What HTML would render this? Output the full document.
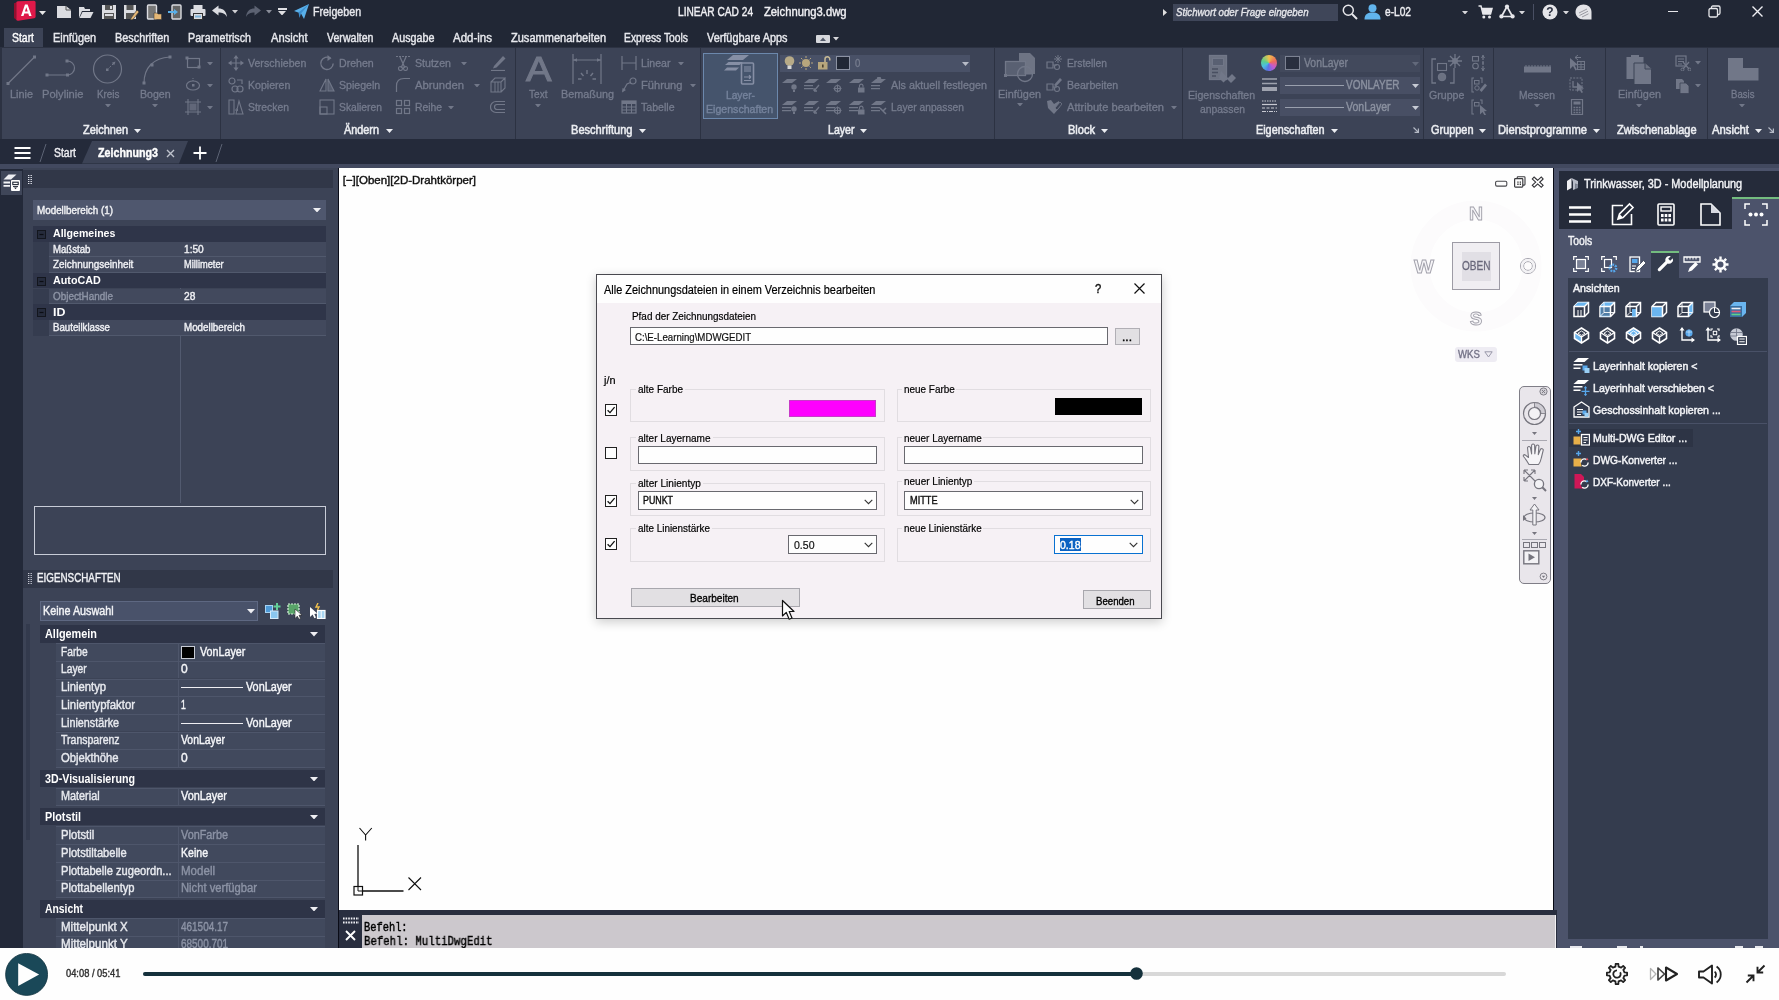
<!DOCTYPE html>
<html><head><meta charset="utf-8"><title>LINEAR CAD 24</title>
<style>
html,body{margin:0;padding:0}
body{width:1779px;height:1000px;position:relative;overflow:hidden;background:#222836;font-family:"Liberation Sans",sans-serif}
.t{position:absolute;white-space:nowrap;display:block;transform-origin:0 50%}
.r{position:absolute;box-sizing:border-box;display:block}
#w{position:absolute;left:0;top:0;width:1779px;height:1000px;overflow:hidden;will-change:transform;opacity:.9999}
</style></head><body><div id="w">
<div class="r" style="left:0.0px;top:0.0px;width:1779.0px;height:47.0px;background:#222836;"></div>
<svg class="r" style="left:13.0px;top:0.0px;" width="24" height="22" viewBox="0 0 24 22"><path d="M3.2 2.6Q3.4 1.4 4.8 1.3L21 0.8Q22.6 0.8 22.6 2.4V16.6Q22.6 18 21.2 18.3L5.4 20.8Q3.8 21 3.2 19.8Z" fill="#e01a4a"/><path d="M1 3.2L3.2 2.4V19.8L1.6 18.6Q1 18.2 1 17.4Z" fill="#96102f"/><path d="M8 16L12 4.6h2.6L18.6 16h-2.5l-.8-2.6h-4l-.8 2.6Zm3.9-4.5h2.8l-1.4-4.3Z" fill="#fff"/></svg>
<svg class="r" style="left:38.5px;top:10.5px;" width="7" height="4" viewBox="0 0 7 4"><path d="M0 0H7L3.5 4Z" fill="#e8e8e8"/></svg>
<svg class="r" style="left:56.0px;top:4.0px;" width="16" height="16" viewBox="0 0 16 16"><path d="M1 2H10L15 6V14H1Z" fill="#dcdde2"/><path d="M10 2V6H15" fill="none" stroke="#555" stroke-width="1"/></svg>
<svg class="r" style="left:78.0px;top:4.0px;" width="16" height="16" viewBox="0 0 16 16"><path d="M1 3H6L7 5H12V7H4L1 14Z" fill="#dcdde2"/><path d="M4.5 8H15.5L12.5 14H1.5Z" fill="#dcdde2"/></svg>
<svg class="r" style="left:101.0px;top:4.0px;" width="16" height="16" viewBox="0 0 16 16"><path d="M1 1H15V15H1Z" fill="#dcdde2"/><rect x="4" y="1" width="8" height="5" fill="#555"/><rect x="9" y="2" width="2" height="3" fill="#dcdde2"/><rect x="3" y="9" width="10" height="6" fill="#555"/><rect x="4" y="10" width="8" height="2" fill="#dcdde2"/></svg>
<svg class="r" style="left:123.0px;top:4.0px;" width="16" height="16" viewBox="0 0 16 16"><path d="M1 1H13V15H1Z" fill="#dcdde2"/><rect x="3.5" y="1" width="7" height="5" fill="#555"/><rect x="3" y="9" width="8" height="6" fill="#555"/><path d="M8 14L14 6L16 8L10 15.5L7.5 16Z" fill="#e6b877" stroke="#333" stroke-width=".6"/></svg>
<svg class="r" style="left:146.0px;top:4.0px;" width="16" height="16" viewBox="0 0 16 16"><rect x="1.5" y="1" width="9" height="14" rx="1" fill="#777" stroke="#dcdde2" stroke-width="1.4"/><path d="M8 9H11L12 10H15.5V15.5H8Z" fill="#e6b877" stroke="#333" stroke-width=".5"/></svg>
<svg class="r" style="left:168.0px;top:4.0px;" width="16" height="16" viewBox="0 0 16 16"><rect x="4" y="1" width="9" height="14" rx="1" fill="#666" stroke="#dcdde2" stroke-width="1.4"/><path d="M0 7H6V5L10 8L6 11V9H0Z" fill="#5bb0e8"/></svg>
<svg class="r" style="left:190.0px;top:4.0px;" width="16" height="16" viewBox="0 0 16 16"><rect x="3.5" y="1" width="9" height="5" fill="#dcdde2"/><rect x="0.5" y="5" width="15" height="7" rx="1" fill="#dcdde2"/><rect x="3.5" y="9.5" width="9" height="6" fill="#dcdde2" stroke="#333" stroke-width="1"/><rect x="5" y="11.5" width="6" height="2" fill="#7fb4d8"/></svg>
<svg class="r" style="left:212.0px;top:5.0px;" width="16" height="14" viewBox="0 0 16 14"><path d="M0 5.5L6.5 0.5V3.5C11 3.5 14.5 6 15 12C13 8.5 10.5 7.5 6.5 7.5V10.5Z" fill="#dcdde2"/></svg>
<svg class="r" style="left:232.4px;top:10.2px;" width="6" height="3.5" viewBox="0 0 6 3.5"><path d="M0 0H6L3.0 3.5Z" fill="#d0d0d4"/></svg>
<svg class="r" style="left:245.0px;top:5.0px;" width="16" height="14" viewBox="0 0 16 14"><path d="M16 5.5L9.5 0.5V3.5C5 3.5 1.5 6 1 12C3 8.5 5.5 7.5 9.5 7.5V10.5Z" fill="#5d6373"/></svg>
<svg class="r" style="left:265.7px;top:10.2px;" width="6" height="3.5" viewBox="0 0 6 3.5"><path d="M0 0H6L3.0 3.5Z" fill="#8a8e9a"/></svg>
<div class="r" style="left:277.5px;top:8.0px;width:9.0px;height:1.6px;background:#e0e0e4;"></div>
<svg class="r" style="left:278.0px;top:10.9px;" width="8" height="4.5" viewBox="0 0 8 4.5"><path d="M0 0H8L4.0 4.5Z" fill="#e0e0e4"/></svg>
<svg class="r" style="left:294.0px;top:4.0px;" width="15" height="15" viewBox="0 0 15 15"><path d="M0 7L15 0L10 15L7 9.5Z" fill="#5ab0ea"/><path d="M15 0L7 9.5L5.5 14L4.5 8.6Z" fill="#3d8fd0"/></svg>
<span class="t" style="left:313.2px;top:3.8px;font-size:12px;line-height:16px;color:#e8e9ee;transform:scaleX(0.890);-webkit-text-stroke:0.4px #e8e9ee;">Freigeben</span>
<span class="t" style="left:678.0px;top:3.8px;font-size:12px;line-height:16px;color:#f0f0f4;transform:scaleX(0.846);-webkit-text-stroke:0.4px #f0f0f4;">LINEAR CAD 24</span>
<span class="t" style="left:764.0px;top:3.8px;font-size:12px;line-height:16px;color:#f0f0f4;transform:scaleX(0.937);-webkit-text-stroke:0.4px #f0f0f4;">Zeichnung3.dwg</span>
<svg class="r" style="left:1163.0px;top:8.5px;" width="4" height="7" viewBox="0 0 4 7"><path d="M0 0L4 3.5L0 7Z" fill="#e0e0e0"/></svg>
<div class="r" style="left:1173.0px;top:3.5px;width:165.0px;height:17.0px;background:#40475a;"></div>
<span class="t" style="left:1175.5px;top:4.6px;font-size:11px;line-height:15px;color:#e4e5ea;transform:scaleX(0.881);-webkit-text-stroke:0.4px #e4e5ea;font-style:italic;">Stichwort oder Frage eingeben</span>
<svg class="r" style="left:1342.0px;top:4.0px;" width="16" height="16" viewBox="0 0 16 16"><circle cx="6.3" cy="6.3" r="5" fill="none" stroke="#e8e8ec" stroke-width="1.5"/><path d="M10 10L15 15" stroke="#e8e8ec" stroke-width="2"/></svg>
<svg class="r" style="left:1364.0px;top:3.0px;" width="17" height="17" viewBox="0 0 17 17"><circle cx="8.5" cy="5.2" r="4" fill="#62b5ee"/><path d="M0.5 16.5C0.5 11 4 9.6 8.5 9.6S16.5 11 16.5 16.5Z" fill="#62b5ee"/></svg>
<span class="t" style="left:1385.0px;top:4.1px;font-size:12px;line-height:16px;color:#f0f0f4;transform:scaleX(0.847);-webkit-text-stroke:0.4px #f0f0f4;">e-L02</span>
<svg class="r" style="left:1462.0px;top:10.8px;" width="6" height="3.5" viewBox="0 0 6 3.5"><path d="M0 0H6L3.0 3.5Z" fill="#d8d8dc"/></svg>
<svg class="r" style="left:1478.0px;top:5.0px;" width="15" height="14" viewBox="0 0 15 14"><path d="M0.5 1H3L5 9H12.5L14 3.5H4" fill="none" stroke="#e8e8ec" stroke-width="1.5"/><circle cx="5.8" cy="12" r="1.5" fill="#e8e8ec"/><circle cx="11.5" cy="12" r="1.5" fill="#e8e8ec"/><path d="M4 3.5H14L12.5 9H5Z" fill="#e8e8ec"/></svg>
<svg class="r" style="left:1499.0px;top:4.0px;" width="16" height="15" viewBox="0 0 16 15"><path d="M8 2.5L2.5 12.5H13.5Z" fill="none" stroke="#e8e8ec" stroke-width="1.7"/><circle cx="8" cy="2.6" r="2.1" fill="#e8e8ec"/><circle cx="2.4" cy="12.4" r="2.1" fill="#e8e8ec"/><circle cx="13.6" cy="12.4" r="2.1" fill="#e8e8ec"/></svg>
<svg class="r" style="left:1518.5px;top:10.8px;" width="6" height="3.5" viewBox="0 0 6 3.5"><path d="M0 0H6L3.0 3.5Z" fill="#d8d8dc"/></svg>
<div class="r" style="left:1533.0px;top:4.0px;width:1.0px;height:16.0px;background:#4a5064;"></div>
<svg class="r" style="left:1542.0px;top:4.0px;" width="16" height="16" viewBox="0 0 16 16"><circle cx="8" cy="8" r="7.5" fill="#e6e6ea"/><text x="8" y="12.2" font-size="12" font-weight="bold" text-anchor="middle" fill="#2a3040" font-family="Liberation Sans">?</text></svg>
<svg class="r" style="left:1563.0px;top:10.8px;" width="6" height="3.5" viewBox="0 0 6 3.5"><path d="M0 0H6L3.0 3.5Z" fill="#d8d8dc"/></svg>
<svg class="r" style="left:1575.0px;top:4.0px;" width="17" height="16" viewBox="0 0 17 16"><path d="M8.5 0.5C13 0.5 16.5 3.5 16.5 8V15.5H8.5C4 15.5 0.5 12.5 0.5 8S4 0.5 8.5 0.5Z" fill="#e4e4e8"/><path d="M4 9L12 5M4.5 11.5L13 7.2M7 13L13.5 9.8" stroke="#9a9aa2" stroke-width="1"/></svg>
<div class="r" style="left:1668.0px;top:11.0px;width:10.0px;height:1.3px;background:#e8e8ec;"></div>
<svg class="r" style="left:1708.0px;top:5.0px;" width="13" height="13" viewBox="0 0 13 13"><rect x="1" y="3.5" width="8.5" height="8.5" rx="1.5" fill="none" stroke="#e8e8ec" stroke-width="1.3"/><path d="M3.5 3.5V2.5Q3.5 1 5 1H10.5Q12 1 12 2.5V8Q12 9.5 10.5 9.5H9.5" fill="none" stroke="#e8e8ec" stroke-width="1.3"/></svg>
<svg class="r" style="left:1752.0px;top:6.0px;" width="11" height="11" viewBox="0 0 11 11"><path d="M0.5 0.5L10.5 10.5M10.5 0.5L0.5 10.5" stroke="#f0f0f4" stroke-width="1.4"/></svg>
<div class="r" style="left:4.0px;top:28.0px;width:38.5px;height:20.0px;background:#3d4457;"></div>
<span class="t" style="left:12.0px;top:29.8px;font-size:12px;line-height:16px;color:#fff;transform:scaleX(0.868);-webkit-text-stroke:0.4px #fff;">Start</span>
<span class="t" style="left:53.0px;top:29.8px;font-size:12px;line-height:16px;color:#e9eaef;transform:scaleX(0.912);-webkit-text-stroke:0.4px #e9eaef;">Einfügen</span>
<span class="t" style="left:115.0px;top:29.8px;font-size:12px;line-height:16px;color:#e9eaef;transform:scaleX(0.905);-webkit-text-stroke:0.4px #e9eaef;">Beschriften</span>
<span class="t" style="left:188.4px;top:29.8px;font-size:12px;line-height:16px;color:#e9eaef;transform:scaleX(0.891);-webkit-text-stroke:0.4px #e9eaef;">Parametrisch</span>
<span class="t" style="left:271.0px;top:29.8px;font-size:12px;line-height:16px;color:#e9eaef;transform:scaleX(0.930);-webkit-text-stroke:0.4px #e9eaef;">Ansicht</span>
<span class="t" style="left:326.5px;top:29.8px;font-size:12px;line-height:16px;color:#e9eaef;transform:scaleX(0.882);-webkit-text-stroke:0.4px #e9eaef;">Verwalten</span>
<span class="t" style="left:392.4px;top:29.8px;font-size:12px;line-height:16px;color:#e9eaef;transform:scaleX(0.895);-webkit-text-stroke:0.4px #e9eaef;">Ausgabe</span>
<span class="t" style="left:453.0px;top:29.8px;font-size:12px;line-height:16px;color:#e9eaef;transform:scaleX(0.959);-webkit-text-stroke:0.4px #e9eaef;">Add-ins</span>
<span class="t" style="left:510.5px;top:29.8px;font-size:12px;line-height:16px;color:#e9eaef;transform:scaleX(0.919);-webkit-text-stroke:0.4px #e9eaef;">Zusammenarbeiten</span>
<span class="t" style="left:624.0px;top:29.8px;font-size:12px;line-height:16px;color:#e9eaef;transform:scaleX(0.859);-webkit-text-stroke:0.4px #e9eaef;">Express Tools</span>
<span class="t" style="left:707.0px;top:29.8px;font-size:12px;line-height:16px;color:#e9eaef;transform:scaleX(0.907);-webkit-text-stroke:0.4px #e9eaef;">Verfügbare Apps</span>
<svg class="r" style="left:816.0px;top:35.0px;" width="14" height="8" viewBox="0 0 14 8"><rect x="0" y="0" width="14" height="8" rx="1" fill="#d8d9de"/><path d="M4 6L7 2.5L10 6Z" fill="#555c6c"/></svg>
<svg class="r" style="left:833.0px;top:37.2px;" width="6" height="3.5" viewBox="0 0 6 3.5"><path d="M0 0H6L3.0 3.5Z" fill="#d8d8dc"/></svg>
<div class="r" style="left:0.0px;top:47.0px;width:1779.0px;height:91.5px;background:#2d3343;"></div>
<div class="r" style="left:1.5px;top:47.5px;width:218.5px;height:91.0px;background:#3d4457;"></div>
<div class="r" style="left:221.2px;top:47.5px;width:293.8px;height:91.0px;background:#3d4457;"></div>
<div class="r" style="left:516.2px;top:47.5px;width:183.8px;height:91.0px;background:#3d4457;"></div>
<div class="r" style="left:701.2px;top:47.5px;width:292.8px;height:91.0px;background:#3d4457;"></div>
<div class="r" style="left:995.2px;top:47.5px;width:186.8px;height:91.0px;background:#3d4457;"></div>
<div class="r" style="left:1183.2px;top:47.5px;width:239.8px;height:91.0px;background:#3d4457;"></div>
<div class="r" style="left:1424.2px;top:47.5px;width:68.8px;height:91.0px;background:#3d4457;"></div>
<div class="r" style="left:1494.2px;top:47.5px;width:110.8px;height:91.0px;background:#3d4457;"></div>
<div class="r" style="left:1606.2px;top:47.5px;width:100.8px;height:91.0px;background:#3d4457;"></div>
<div class="r" style="left:1708.2px;top:47.5px;width:70.8px;height:91.0px;background:#3d4457;"></div>
<svg class="r" style="left:5.0px;top:54.0px;" width="32" height="32" viewBox="0 0 32 32"><path d="M3 29.5L29.5 3" stroke="#727889" stroke-width="1.2"/><rect x="1.5" y="28" width="3" height="3" fill="#727889"/><rect x="28" y="1.5" width="3" height="3" fill="#727889"/></svg>
<span class="t" style="left:10.0px;top:87.1px;font-size:10.6px;line-height:14.6px;color:#777d8f;transform:scaleX(1.027);-webkit-text-stroke:0.3px #777d8f;">Linie</span>
<svg class="r" style="left:44.0px;top:58.0px;" width="36" height="24" viewBox="0 0 36 24"><path d="M3 17H23.5A7 7 0 1 0 23.5 3" fill="none" stroke="#727889" stroke-width="1.2"/><rect x="1.5" y="15.5" width="3" height="3" fill="#727889"/><rect x="22" y="15.5" width="3" height="3" fill="#727889"/><rect x="21.5" y="1.5" width="3" height="3" fill="#727889"/></svg>
<span class="t" style="left:42.0px;top:87.1px;font-size:10.6px;line-height:14.6px;color:#777d8f;transform:scaleX(1.051);-webkit-text-stroke:0.3px #777d8f;">Polylinie</span>
<svg class="r" style="left:92.0px;top:54.0px;" width="32" height="32" viewBox="0 0 32 32"><circle cx="15.5" cy="15" r="14" fill="none" stroke="#727889" stroke-width="1.2"/><path d="M15 16L22.5 8.5" stroke="#727889" stroke-width="1" stroke-dasharray="2 1.5"/><path d="M23.5 7.5L19.8 8.8L22.2 11.2Z" fill="#727889"/><rect x="14" y="14.5" width="2.5" height="2.5" fill="#727889"/></svg>
<span class="t" style="left:96.5px;top:87.1px;font-size:10.6px;line-height:14.6px;color:#777d8f;transform:scaleX(0.932);-webkit-text-stroke:0.3px #777d8f;">Kreis</span>
<svg class="r" style="left:104.5px;top:103.5px;" width="6" height="3.5" viewBox="0 0 6 3.5"><path d="M0 0H6L3.0 3.5Z" fill="#727889"/></svg>
<svg class="r" style="left:140.0px;top:54.0px;" width="34" height="32" viewBox="0 0 34 32"><path d="M4 29C4 14 13 4 30 3" fill="none" stroke="#727889" stroke-width="1.2"/><rect x="2.5" y="27.5" width="3" height="3" fill="#727889"/><rect x="28.5" y="1.5" width="3" height="3" fill="#727889"/><rect x="10.5" y="9.5" width="3" height="3" fill="#727889"/></svg>
<span class="t" style="left:140.0px;top:87.1px;font-size:10.6px;line-height:14.6px;color:#777d8f;-webkit-text-stroke:0.3px #777d8f;">Bogen</span>
<svg class="r" style="left:152.0px;top:103.5px;" width="6" height="3.5" viewBox="0 0 6 3.5"><path d="M0 0H6L3.0 3.5Z" fill="#727889"/></svg>
<svg class="r" style="left:185.0px;top:55.0px;" width="16" height="16" viewBox="0 0 16 16"><rect x="2.5" y="3.5" width="12" height="9" fill="none" stroke="#727889" stroke-width="1.2"/><rect x="0.5" y="1.5" width="3" height="3" fill="#727889"/><rect x="12.5" y="10.5" width="3" height="3" fill="#727889"/></svg>
<svg class="r" style="left:185.0px;top:77.0px;" width="16" height="16" viewBox="0 0 16 16"><ellipse cx="8" cy="8.5" rx="6.5" ry="4.5" fill="none" stroke="#727889" stroke-width="1.2"/><rect x="7" y="7" width="2.5" height="2.5" fill="#727889"/><path d="M8 4V1" stroke="#727889" stroke-dasharray="1 1"/></svg>
<svg class="r" style="left:185.0px;top:99.0px;" width="16" height="16" viewBox="0 0 16 16"><path d="M3 0V16M13 0V16M0 3H16M0 13H16" stroke="#727889" stroke-width="1.1"/><rect x="4.5" y="4.5" width="7" height="7" fill="#727889" opacity=".7"/></svg>
<svg class="r" style="left:206.5px;top:61.8px;" width="6" height="3.5" viewBox="0 0 6 3.5"><path d="M0 0H6L3.0 3.5Z" fill="#727889"/></svg>
<svg class="r" style="left:206.5px;top:83.8px;" width="6" height="3.5" viewBox="0 0 6 3.5"><path d="M0 0H6L3.0 3.5Z" fill="#727889"/></svg>
<svg class="r" style="left:206.5px;top:105.8px;" width="6" height="3.5" viewBox="0 0 6 3.5"><path d="M0 0H6L3.0 3.5Z" fill="#727889"/></svg>
<span class="t" style="left:82.5px;top:121.8px;font-size:12px;line-height:16px;color:#eceef2;transform:scaleX(0.912);-webkit-text-stroke:0.55px #eceef2;">Zeichnen</span>
<svg class="r" style="left:133.5px;top:128.5px;" width="7" height="4" viewBox="0 0 7 4"><path d="M0 0H7L3.5 4Z" fill="#eceef2"/></svg>
<svg class="r" style="left:228.0px;top:55.0px;" width="16" height="16" viewBox="0 0 16 16"><path d="M8 2V14M2 8H14" stroke="#727889" stroke-width="1.2"/><path d="M8 0L10.6 3.6H5.4ZM8 16L10.6 12.4H5.4ZM0 8L3.6 5.4V10.6ZM16 8L12.4 5.4V10.6Z" fill="#727889"/></svg>
<span class="t" style="left:248.0px;top:55.5px;font-size:10.6px;line-height:14.6px;color:#777d8f;-webkit-text-stroke:0.3px #777d8f;">Verschieben</span>
<svg class="r" style="left:228.0px;top:77.0px;" width="16" height="16" viewBox="0 0 16 16"><circle cx="4" cy="4" r="3" fill="none" stroke="#727889" stroke-width="1.2"/><circle cx="7" cy="12" r="3" fill="none" stroke="#727889" stroke-width="1.2"/><circle cx="12" cy="12" r="3" fill="none" stroke="#727889" stroke-width="1.2"/><path d="M9 3H14V7" fill="none" stroke="#727889" stroke-width="1.2"/></svg>
<span class="t" style="left:248.0px;top:77.5px;font-size:10.6px;line-height:14.6px;color:#777d8f;-webkit-text-stroke:0.3px #777d8f;">Kopieren</span>
<svg class="r" style="left:228.0px;top:99.0px;" width="16" height="16" viewBox="0 0 16 16"><path d="M1 1H6V15H1ZM8 15L11 2L15 15Z" fill="none" stroke="#727889" stroke-width="1.1"/><path d="M7 11H10M10 11L8.5 9.6M10 11L8.5 12.4" stroke="#727889" stroke-width="1"/></svg>
<span class="t" style="left:248.0px;top:99.5px;font-size:10.6px;line-height:14.6px;color:#777d8f;transform:scaleX(0.980);-webkit-text-stroke:0.3px #777d8f;">Strecken</span>
<svg class="r" style="left:319.0px;top:55.0px;" width="16" height="16" viewBox="0 0 16 16"><path d="M11.5 3.2A6.2 6.2 0 1 0 14.2 8.5" fill="none" stroke="#727889" stroke-width="1.4"/><path d="M8.5 0L12.5 3.2L8.5 6Z" fill="#727889"/></svg>
<span class="t" style="left:339.0px;top:55.5px;font-size:10.6px;line-height:14.6px;color:#777d8f;-webkit-text-stroke:0.3px #777d8f;">Drehen</span>
<svg class="r" style="left:319.0px;top:77.0px;" width="16" height="16" viewBox="0 0 16 16"><path d="M7 2V14H1ZM9 2V14H15Z" fill="none" stroke="#727889" stroke-width="1.1"/><path d="M9 2V14H15Z" fill="#727889" opacity=".5"/></svg>
<span class="t" style="left:339.0px;top:77.5px;font-size:10.6px;line-height:14.6px;color:#777d8f;-webkit-text-stroke:0.3px #777d8f;">Spiegeln</span>
<svg class="r" style="left:319.0px;top:99.0px;" width="16" height="16" viewBox="0 0 16 16"><rect x="1" y="1" width="14" height="14" fill="none" stroke="#727889" stroke-width="1.1"/><rect x="1" y="8" width="7" height="7" fill="none" stroke="#727889" stroke-width="1.1"/></svg>
<span class="t" style="left:339.0px;top:99.5px;font-size:10.6px;line-height:14.6px;color:#777d8f;transform:scaleX(0.973);-webkit-text-stroke:0.3px #777d8f;">Skalieren</span>
<svg class="r" style="left:395.0px;top:55.0px;" width="16" height="16" viewBox="0 0 16 16"><path d="M1 1.5H15" stroke="#727889" stroke-width="1" stroke-dasharray="2 1"/><path d="M5 2L10 13M11 2L6 13" stroke="#727889" stroke-width="1.3"/><circle cx="5.5" cy="13.5" r="2" fill="none" stroke="#727889" stroke-width="1.1"/><circle cx="10.5" cy="13.5" r="2" fill="none" stroke="#727889" stroke-width="1.1"/></svg>
<span class="t" style="left:415.0px;top:55.5px;font-size:10.6px;line-height:14.6px;color:#777d8f;-webkit-text-stroke:0.3px #777d8f;">Stutzen</span>
<svg class="r" style="left:461.0px;top:61.8px;" width="6" height="3.5" viewBox="0 0 6 3.5"><path d="M0 0H6L3.0 3.5Z" fill="#727889"/></svg>
<svg class="r" style="left:395.0px;top:77.0px;" width="16" height="16" viewBox="0 0 16 16"><path d="M1.5 15V9Q1.5 1.5 9 1.5H15" fill="none" stroke="#727889" stroke-width="1.2"/></svg>
<span class="t" style="left:415.0px;top:77.5px;font-size:10.6px;line-height:14.6px;color:#777d8f;transform:scaleX(1.066);-webkit-text-stroke:0.3px #777d8f;">Abrunden</span>
<svg class="r" style="left:473.5px;top:83.8px;" width="6" height="3.5" viewBox="0 0 6 3.5"><path d="M0 0H6L3.0 3.5Z" fill="#727889"/></svg>
<svg class="r" style="left:395.0px;top:99.0px;" width="16" height="16" viewBox="0 0 16 16"><rect x="1.5" y="1.5" width="5" height="5" fill="none" stroke="#727889" stroke-width="1.2"/><rect x="9.5" y="1.5" width="5" height="5" fill="none" stroke="#727889" stroke-width="1.2"/><rect x="1.5" y="9.5" width="5" height="5" fill="none" stroke="#727889" stroke-width="1.2"/><rect x="9.5" y="9.5" width="5" height="5" fill="none" stroke="#727889" stroke-width="1.2"/></svg>
<span class="t" style="left:415.0px;top:99.5px;font-size:10.6px;line-height:14.6px;color:#777d8f;transform:scaleX(0.975);-webkit-text-stroke:0.3px #777d8f;">Reihe</span>
<svg class="r" style="left:448.0px;top:105.8px;" width="6" height="3.5" viewBox="0 0 6 3.5"><path d="M0 0H6L3.0 3.5Z" fill="#727889"/></svg>
<svg class="r" style="left:490.0px;top:55.0px;" width="16" height="16" viewBox="0 0 16 16"><path d="M4 11L13 1L15.5 3.5L6.5 12.5L3 13.5Z" fill="#727889"/><path d="M1 15.5H15" stroke="#727889" stroke-width="1.2"/></svg>
<svg class="r" style="left:490.0px;top:77.0px;" width="16" height="16" viewBox="0 0 16 16"><path d="M1 5H11V15H1ZM1 5L5 1H15L11 5M15 1V11L11 15" fill="none" stroke="#727889" stroke-width="1.1"/><path d="M5 5V15M8 5V15" stroke="#727889" stroke-width="1"/></svg>
<svg class="r" style="left:490.0px;top:99.0px;" width="16" height="16" viewBox="0 0 16 16"><path d="M15 2.5H6A5.5 5.5 0 0 0 6 13.5H15M15 5.5H7A2.5 2.5 0 0 0 7 10.5H15" fill="none" stroke="#727889" stroke-width="1.2"/></svg>
<span class="t" style="left:344.0px;top:121.8px;font-size:12px;line-height:16px;color:#eceef2;transform:scaleX(0.905);-webkit-text-stroke:0.55px #eceef2;">Ändern</span>
<svg class="r" style="left:385.5px;top:128.5px;" width="7" height="4" viewBox="0 0 7 4"><path d="M0 0H7L3.5 4Z" fill="#eceef2"/></svg>
<span class="t" style="left:525.5px;top:49.4px;font-size:35px;line-height:39px;color:#727889;transform:scaleX(1.092);-webkit-text-stroke:1.1px #727889;">A</span>
<span class="t" style="left:529.0px;top:87.1px;font-size:10.6px;line-height:14.6px;color:#777d8f;transform:scaleX(0.952);-webkit-text-stroke:0.3px #777d8f;">Text</span>
<svg class="r" style="left:535.0px;top:103.5px;" width="6" height="3.5" viewBox="0 0 6 3.5"><path d="M0 0H6L3.0 3.5Z" fill="#727889"/></svg>
<svg class="r" style="left:571.0px;top:54.0px;" width="32" height="31" viewBox="0 0 32 31"><path d="M2 0V30M30 0V30" stroke="#727889" stroke-width="1.2"/><path d="M2 6H30" stroke="#727889" stroke-width="1"/><path d="M2 6L6 4.3V7.7ZM30 6L26 4.3V7.7Z" fill="#727889"/><path d="M16 16V20M10 19L12.5 22M22 19L19.5 22M7 25H10.5M25 25H21.5" stroke="#727889" stroke-width="1.4"/></svg>
<span class="t" style="left:561.0px;top:87.1px;font-size:10.6px;line-height:14.6px;color:#777d8f;transform:scaleX(1.022);-webkit-text-stroke:0.3px #777d8f;">Bemaßung</span>
<svg class="r" style="left:621.0px;top:55.0px;" width="16" height="16" viewBox="0 0 16 16"><path d="M1 1V15M15 1V15M1 8H15" stroke="#727889" stroke-width="1.2"/></svg>
<span class="t" style="left:641.0px;top:55.5px;font-size:10.6px;line-height:14.6px;color:#777d8f;-webkit-text-stroke:0.3px #777d8f;">Linear</span>
<svg class="r" style="left:677.5px;top:61.8px;" width="6" height="3.5" viewBox="0 0 6 3.5"><path d="M0 0H6L3.0 3.5Z" fill="#727889"/></svg>
<svg class="r" style="left:621.0px;top:77.0px;" width="16" height="16" viewBox="0 0 16 16"><circle cx="12" cy="4" r="3" fill="none" stroke="#727889" stroke-width="1.2"/><path d="M9.5 5.5L6 7L2 14" fill="none" stroke="#727889" stroke-width="1.2"/><path d="M1 15.5L1.6 11L5 13Z" fill="#727889"/></svg>
<span class="t" style="left:641.0px;top:77.5px;font-size:10.6px;line-height:14.6px;color:#777d8f;transform:scaleX(1.051);-webkit-text-stroke:0.3px #777d8f;">Führung</span>
<svg class="r" style="left:689.5px;top:83.8px;" width="6" height="3.5" viewBox="0 0 6 3.5"><path d="M0 0H6L3.0 3.5Z" fill="#727889"/></svg>
<svg class="r" style="left:621.0px;top:99.0px;" width="16" height="16" viewBox="0 0 16 16"><rect x="1" y="2" width="14" height="12" fill="none" stroke="#727889" stroke-width="1.2"/><rect x="1" y="2" width="14" height="3" fill="#727889"/><path d="M1 8H15M1 11H15M5.5 5V14M10.5 5V14" stroke="#727889" stroke-width="1"/></svg>
<span class="t" style="left:641.0px;top:99.5px;font-size:10.6px;line-height:14.6px;color:#777d8f;-webkit-text-stroke:0.3px #777d8f;">Tabelle</span>
<span class="t" style="left:571.0px;top:121.8px;font-size:12px;line-height:16px;color:#eceef2;transform:scaleX(0.922);-webkit-text-stroke:0.55px #eceef2;">Beschriftung</span>
<svg class="r" style="left:638.5px;top:128.5px;" width="7" height="4" viewBox="0 0 7 4"><path d="M0 0H7L3.5 4Z" fill="#eceef2"/></svg>
<div class="r" style="left:703.0px;top:52.5px;width:74.5px;height:66.5px;background:#46556d;border:1px solid #6d89ad;"></div>
<svg class="r" style="left:724.0px;top:54.0px;" width="34" height="32" viewBox="0 0 34 32"><path d="M9 1H25L19 6H3Z" fill="#8790a6"/><path d="M4.5 8H19L15.5 11H1Z" fill="#8790a6"/><path d="M3 13.5H15L12 16.5H0Z" fill="#8790a6"/><rect x="17.5" y="9" width="12" height="21" rx="1" fill="#46556d" stroke="#8790a6" stroke-width="1.6"/><rect x="20" y="12" width="7" height="6" fill="#8790a6" opacity=".55"/><path d="M20 23H27M27 23L25 21.3M27 23L25 24.7M20 26.5H27" stroke="#8790a6" stroke-width="1.2" fill="none"/></svg>
<span class="t" style="left:725.5px;top:87.5px;font-size:10.6px;line-height:14.6px;color:#76849d;transform:scaleX(0.965);-webkit-text-stroke:0.4px #76849d;">Layer-</span>
<span class="t" style="left:706.0px;top:101.5px;font-size:10.6px;line-height:14.6px;color:#76849d;-webkit-text-stroke:0.4px #76849d;">Eigenschaften</span>
<div class="r" style="left:780.0px;top:54.5px;width:190.0px;height:17.0px;background:#4a5268;"></div>
<svg class="r" style="left:784.0px;top:55.0px;" width="11" height="16" viewBox="0 0 11 16"><circle cx="5.5" cy="6" r="4.8" fill="#b8ab88"/><rect x="3.5" y="10.5" width="4" height="3.5" fill="#d8d8d8"/></svg>
<svg class="r" style="left:799.0px;top:56.0px;" width="14" height="14" viewBox="0 0 14 14"><circle cx="7" cy="7" r="4" fill="#b8a77e"/><path d="M7 0V14M0 7H14M2 2L12 12M12 2L2 12" stroke="#b8a77e" stroke-width="1" stroke-dasharray="2 10" /></svg>
<svg class="r" style="left:817.0px;top:55.0px;" width="15" height="16" viewBox="0 0 15 16"><rect x="1" y="7" width="9.5" height="7.5" fill="#b8a77e"/><rect x="5" y="9.5" width="1.6" height="3" fill="#4a4230"/><path d="M8 7V4.2A2.4 2.4 0 0 1 12.8 4.2V5.6" fill="none" stroke="#c9bb96" stroke-width="1.5"/></svg>
<div class="r" style="left:836.0px;top:56.0px;width:14.0px;height:14.0px;background:#222836;border:1px solid #8d93a3;"></div>
<span class="t" style="left:855.0px;top:55.8px;font-size:10.6px;line-height:14.6px;color:#777d8f;transform:scaleX(0.900);-webkit-text-stroke:0.3px #777d8f;">0</span>
<svg class="r" style="left:961.5px;top:61.5px;" width="7" height="4" viewBox="0 0 7 4"><path d="M0 0H7L3.5 4Z" fill="#b8bcc8"/></svg>
<svg class="r" style="left:782.0px;top:77.0px;" width="16" height="16" viewBox="0 0 16 16"><path d="M5 2H15L10 6H0Z" fill="#727889"/><circle cx="12" cy="10" r="2.7" fill="#727889"/><rect x="11" y="13" width="2" height="2" fill="#727889"/></svg>
<svg class="r" style="left:804.0px;top:77.0px;" width="16" height="16" viewBox="0 0 16 16"><path d="M5 2H15L10 6H0Z" fill="#727889"/><path d="M0 8H9V9.3H0ZM0 11H9V12.3H0Z" fill="#727889"/><path d="M15 8L10 14M10 14V11M10 14H13" stroke="#727889" stroke-width="1.3" fill="none"/></svg>
<svg class="r" style="left:826.0px;top:77.0px;" width="16" height="16" viewBox="0 0 16 16"><path d="M5 2H15L10 6H0Z" fill="#727889"/><circle cx="11.5" cy="11.5" r="3" fill="none" stroke="#727889" stroke-width="1.2"/><path d="M11.5 7.5V15.5M7.5 11.5H15.5" stroke="#727889" stroke-width="1"/></svg>
<svg class="r" style="left:849.0px;top:77.0px;" width="16" height="16" viewBox="0 0 16 16"><path d="M5 2H15L10 6H0Z" fill="#727889"/><rect x="9" y="10.5" width="6.5" height="5" fill="#727889"/><path d="M10.5 10.5V8.5A1.8 1.8 0 0 1 14 8.5V10.5" fill="none" stroke="#727889" stroke-width="1.1"/></svg>
<svg class="r" style="left:871.0px;top:77.0px;" width="16" height="16" viewBox="0 0 16 16"><path d="M5 2H15L10 6H0Z" fill="#727889"/><path d="M0 8H9V9.3H0ZM0 11H9V12.3H0Z" fill="#727889"/><circle cx="8" cy="1.8" r="2.2" fill="#727889"/></svg>
<svg class="r" style="left:782.0px;top:99.0px;" width="16" height="16" viewBox="0 0 16 16"><path d="M5 2H15L10 6H0Z" fill="#727889"/><path d="M0 8H9V9.3H0ZM0 11H9V12.3H0Z" fill="#727889"/><circle cx="12" cy="10" r="2.7" fill="#727889"/><rect x="11" y="13" width="2" height="2" fill="#727889"/></svg>
<svg class="r" style="left:804.0px;top:99.0px;" width="16" height="16" viewBox="0 0 16 16"><path d="M5 2H15L10 6H0Z" fill="#727889"/><path d="M0 8H9V9.3H0ZM0 11H9V12.3H0Z" fill="#727889"/><path d="M15 8L10 14M10 14V11M10 14H13" stroke="#727889" stroke-width="1.3" fill="none"/></svg>
<svg class="r" style="left:826.0px;top:99.0px;" width="16" height="16" viewBox="0 0 16 16"><path d="M5 2H15L10 6H0Z" fill="#727889"/><path d="M0 8H9V9.3H0ZM0 11H9V12.3H0Z" fill="#727889"/><circle cx="11.5" cy="11.5" r="3" fill="none" stroke="#727889" stroke-width="1.2"/><path d="M11.5 7.5V15.5M7.5 11.5H15.5" stroke="#727889" stroke-width="1"/></svg>
<svg class="r" style="left:849.0px;top:99.0px;" width="16" height="16" viewBox="0 0 16 16"><path d="M5 2H15L10 6H0Z" fill="#727889"/><path d="M0 8H9V9.3H0ZM0 11H9V12.3H0Z" fill="#727889"/><rect x="9" y="10.5" width="6.5" height="5" fill="#727889"/><path d="M10.5 10.5V8.5A1.8 1.8 0 0 1 14 8.5V10.5" fill="none" stroke="#727889" stroke-width="1.1"/></svg>
<svg class="r" style="left:871.0px;top:99.0px;" width="16" height="16" viewBox="0 0 16 16"><path d="M5 2H15L10 6H0Z" fill="#727889"/><path d="M0 8H9V9.3H0ZM0 11H9V12.3H0Z" fill="#727889"/><path d="M9 9L15 15M15 9L12 12" stroke="#727889" stroke-width="1.5"/></svg>
<span class="t" style="left:891.0px;top:77.5px;font-size:10.6px;line-height:14.6px;color:#777d8f;transform:scaleX(1.018);-webkit-text-stroke:0.3px #777d8f;">Als aktuell festlegen</span>
<span class="t" style="left:891.0px;top:99.5px;font-size:10.6px;line-height:14.6px;color:#777d8f;transform:scaleX(0.968);-webkit-text-stroke:0.3px #777d8f;">Layer anpassen</span>
<span class="t" style="left:828.0px;top:121.8px;font-size:12px;line-height:16px;color:#eceef2;transform:scaleX(0.883);-webkit-text-stroke:0.55px #eceef2;">Layer</span>
<svg class="r" style="left:859.5px;top:128.5px;" width="7" height="4" viewBox="0 0 7 4"><path d="M0 0H7L3.5 4Z" fill="#eceef2"/></svg>
<svg class="r" style="left:1004.0px;top:52.0px;" width="32" height="31" viewBox="0 0 32 31"><path d="M15 1H26L31 6V22H15Z" fill="#6f7585"/><rect x="1.5" y="9.5" width="20" height="14" fill="#5a6173" stroke="#727889" stroke-width="1.3"/><circle cx="21" cy="22" r="7.5" fill="none" stroke="#727889" stroke-width="1.3"/><path d="M21 14.5V22H28.5" fill="none" stroke="#727889" stroke-width="1"/><rect x="0" y="22" width="3" height="3" fill="#727889"/></svg>
<span class="t" style="left:998.0px;top:86.9px;font-size:10.6px;line-height:14.6px;color:#777d8f;transform:scaleX(1.028);-webkit-text-stroke:0.3px #777d8f;">Einfügen</span>
<svg class="r" style="left:1016.5px;top:102.8px;" width="6" height="3.5" viewBox="0 0 6 3.5"><path d="M0 0H6L3.0 3.5Z" fill="#727889"/></svg>
<svg class="r" style="left:1046.0px;top:55.0px;" width="16" height="16" viewBox="0 0 16 16"><path d="M1 13V7H7V13ZM7 10H11" fill="none" stroke="#727889" stroke-width="1.2"/><circle cx="11" cy="12" r="2.5" fill="none" stroke="#727889" stroke-width="1.1"/><path d="M12 0V8M8 4H16M9.2 1.2L14.8 6.8M14.8 1.2L9.2 6.8" stroke="#727889" stroke-width="1"/></svg>
<span class="t" style="left:1067.0px;top:55.5px;font-size:10.6px;line-height:14.6px;color:#777d8f;transform:scaleX(0.970);-webkit-text-stroke:0.3px #777d8f;">Erstellen</span>
<svg class="r" style="left:1046.0px;top:77.0px;" width="16" height="16" viewBox="0 0 16 16"><path d="M1 13V7H7V13ZM7 10H11" fill="none" stroke="#727889" stroke-width="1.2"/><circle cx="11" cy="12" r="2.5" fill="none" stroke="#727889" stroke-width="1.1"/><path d="M8 8L14 1L16 3L10 9.5Z" fill="#727889"/></svg>
<span class="t" style="left:1067.0px;top:77.5px;font-size:10.6px;line-height:14.6px;color:#777d8f;-webkit-text-stroke:0.3px #777d8f;">Bearbeiten</span>
<svg class="r" style="left:1046.0px;top:99.0px;" width="16" height="16" viewBox="0 0 16 16"><path d="M1 2L5 1L8 5L13 2L14 8L8 15L2 9Z" fill="#727889"/><path d="M9 9L14 3L16 5L11 11Z" fill="#3d4457" stroke="#727889" stroke-width=".8"/></svg>
<span class="t" style="left:1067.0px;top:99.5px;font-size:10.6px;line-height:14.6px;color:#777d8f;transform:scaleX(1.049);-webkit-text-stroke:0.3px #777d8f;">Attribute bearbeiten</span>
<svg class="r" style="left:1171.0px;top:105.8px;" width="6" height="3.5" viewBox="0 0 6 3.5"><path d="M0 0H6L3.0 3.5Z" fill="#727889"/></svg>
<span class="t" style="left:1068.0px;top:121.8px;font-size:12px;line-height:16px;color:#eceef2;transform:scaleX(0.920);-webkit-text-stroke:0.55px #eceef2;">Block</span>
<svg class="r" style="left:1100.5px;top:128.5px;" width="7" height="4" viewBox="0 0 7 4"><path d="M0 0H7L3.5 4Z" fill="#eceef2"/></svg>
<svg class="r" style="left:1208.0px;top:54.0px;" width="31" height="31" viewBox="0 0 31 31"><rect x="1.5" y="1.5" width="17" height="24" fill="#6d7383" stroke="#727889" stroke-width="1.3"/><rect x="4.5" y="4.5" width="11" height="7" fill="#5a6173" stroke="#727889" stroke-width="1"/><path d="M4 15H10M4 18.5H10M4 22H8" stroke="#4a5062" stroke-width="1.4"/><path d="M13 17L20 24L24 20L28 24L23 29L19 25L15.5 28.5L11 24Z" fill="#727889"/></svg>
<span class="t" style="left:1188.0px;top:87.5px;font-size:10.6px;line-height:14.6px;color:#777d8f;-webkit-text-stroke:0.3px #777d8f;">Eigenschaften</span>
<span class="t" style="left:1200.0px;top:101.5px;font-size:10.6px;line-height:14.6px;color:#777d8f;transform:scaleX(0.979);-webkit-text-stroke:0.3px #777d8f;">anpassen</span>
<svg class="r" style="left:1261.0px;top:55.0px;border-radius:8px;background:conic-gradient(#f2c14e 0deg,#ef6d5a 70deg,#c45ad0 130deg,#5a74e8 190deg,#4cc0e0 240deg,#5fd08a 290deg,#f2c14e 360deg);" width="16" height="16" viewBox="0 0 16 16"></svg>
<svg class="r" style="left:1262.0px;top:77.0px;" width="15" height="16" viewBox="0 0 15 16"><path d="M0 2H15M0 6.5H15" stroke="#a0a4b0" stroke-width="1.6"/><path d="M0 12H15" stroke="#a0a4b0" stroke-width="4"/></svg>
<svg class="r" style="left:1262.0px;top:99.0px;" width="15" height="16" viewBox="0 0 15 16"><path d="M0 2H15" stroke="#c8cad2" stroke-width="1.2" stroke-dasharray="1.5 1"/><path d="M0 5.5H15" stroke="#c8cad2" stroke-width="1.2"/><path d="M0 9H15" stroke="#c8cad2" stroke-width="1.2" stroke-dasharray="3 1.5"/><path d="M0 12.5H15" stroke="#c8cad2" stroke-width="1.2" stroke-dasharray="4 1 1 1"/></svg>
<div class="r" style="left:1280.0px;top:54.5px;width:140.0px;height:17.0px;background:#434a5d;"></div>
<div class="r" style="left:1280.0px;top:76.5px;width:140.0px;height:17.5px;background:#495065;"></div>
<div class="r" style="left:1280.0px;top:98.5px;width:140.0px;height:17.5px;background:#495065;"></div>
<div class="r" style="left:1285.0px;top:56.0px;width:14.5px;height:14.0px;background:#2a3040;border:1px solid #7d8393;"></div>
<span class="t" style="left:1304.0px;top:55.1px;font-size:12px;line-height:16px;color:#7d8393;transform:scaleX(0.868);-webkit-text-stroke:0.4px #7d8393;">VonLayer</span>
<svg class="r" style="left:1411.5px;top:61.5px;" width="7" height="4" viewBox="0 0 7 4"><path d="M0 0H7L3.5 4Z" fill="#636a7c"/></svg>
<div class="r" style="left:1285.0px;top:84.6px;width:59.0px;height:1.2px;background:#9aa0ae;"></div>
<span class="t" style="left:1346.0px;top:77.1px;font-size:12px;line-height:16px;color:#8d93a2;transform:scaleX(0.830);-webkit-text-stroke:0.4px #8d93a2;">VONLAYER</span>
<svg class="r" style="left:1411.5px;top:83.5px;" width="7" height="4" viewBox="0 0 7 4"><path d="M0 0H7L3.5 4Z" fill="#c8ccd6"/></svg>
<div class="r" style="left:1285.0px;top:106.6px;width:59.0px;height:1.2px;background:#9aa0ae;"></div>
<span class="t" style="left:1346.0px;top:99.1px;font-size:12px;line-height:16px;color:#8d93a2;transform:scaleX(0.878);-webkit-text-stroke:0.4px #8d93a2;">VonLayer</span>
<svg class="r" style="left:1411.5px;top:105.5px;" width="7" height="4" viewBox="0 0 7 4"><path d="M0 0H7L3.5 4Z" fill="#c8ccd6"/></svg>
<span class="t" style="left:1256.0px;top:121.8px;font-size:12px;line-height:16px;color:#eceef2;transform:scaleX(0.901);-webkit-text-stroke:0.55px #eceef2;">Eigenschaften</span>
<svg class="r" style="left:1330.5px;top:128.5px;" width="7" height="4" viewBox="0 0 7 4"><path d="M0 0H7L3.5 4Z" fill="#eceef2"/></svg>
<svg class="r" style="left:1413.0px;top:127.0px;" width="6" height="6" viewBox="0 0 6 6"><path d="M0.5 0.5L5.2 5.2M5.4 1.6V5.4H1.6" stroke="#b4b9c5" stroke-width="1.2" fill="none"/></svg>
<svg class="r" style="left:1430.0px;top:54.0px;" width="33" height="32" viewBox="0 0 33 32"><path d="M6 5H2V29H6M20 29H24V14" fill="none" stroke="#727889" stroke-width="1.3"/><rect x="7.5" y="9.5" width="9" height="7" fill="none" stroke="#727889" stroke-width="1.1"/><circle cx="12" cy="23" r="3.8" fill="#6d7383" stroke="#727889" stroke-width="1"/><path d="M25 0V14M18 7H32M20 2L30 12M30 2L20 12" stroke="#727889" stroke-width="1.3"/><circle cx="25" cy="7" r="3" fill="#727889"/></svg>
<span class="t" style="left:1429.0px;top:87.5px;font-size:10.6px;line-height:14.6px;color:#777d8f;-webkit-text-stroke:0.3px #777d8f;">Gruppe</span>
<svg class="r" style="left:1471.0px;top:55.0px;" width="16" height="16" viewBox="0 0 16 16"><rect x="1.5" y="1.5" width="6" height="4.5" fill="none" stroke="#727889" stroke-width="1.1"/><circle cx="4.5" cy="11" r="2.8" fill="none" stroke="#727889" stroke-width="1.1"/><path d="M12 0V5M12 16V11M11 8H13M12 6V10" stroke="#727889" stroke-width="1.2"/><path d="M10.5 3L12 0.5L13.5 3M10.5 13L12 15.5L13.5 13" fill="none" stroke="#727889" stroke-width="1"/></svg>
<svg class="r" style="left:1471.0px;top:77.0px;" width="16" height="16" viewBox="0 0 16 16"><path d="M3 1H1V15H3M9 1H11V6" fill="none" stroke="#727889" stroke-width="1.1"/><rect x="3.5" y="3.5" width="4.5" height="3.5" fill="none" stroke="#727889" stroke-width="1"/><circle cx="6" cy="11" r="2.2" fill="none" stroke="#727889" stroke-width="1"/><path d="M8.5 13L14 6.5L16 8.5L10.5 15Z" fill="#727889"/></svg>
<svg class="r" style="left:1471.0px;top:99.0px;" width="16" height="16" viewBox="0 0 16 16"><path d="M3 1H1V15H3M9 1H11V5" fill="none" stroke="#727889" stroke-width="1.1"/><rect x="3.5" y="3.5" width="4.5" height="3.5" fill="none" stroke="#727889" stroke-width="1"/><path d="M9 6L9 15.5L11.5 13L13.5 16.5L15 15.7L13 12.3L16 12Z" fill="#727889"/></svg>
<span class="t" style="left:1430.5px;top:121.8px;font-size:12px;line-height:16px;color:#eceef2;transform:scaleX(0.910);-webkit-text-stroke:0.55px #eceef2;">Gruppen</span>
<svg class="r" style="left:1478.5px;top:128.5px;" width="7" height="4" viewBox="0 0 7 4"><path d="M0 0H7L3.5 4Z" fill="#eceef2"/></svg>
<svg class="r" style="left:1524.0px;top:65.0px;" width="27" height="8" viewBox="0 0 27 8"><rect x="0" y="1.5" width="27" height="6" fill="#727889"/><path d="M2 0V3M5 0V3M8 0V3M11 0V3M14 0V3M17 0V3M20 0V3M23 0V3M26 0V3" stroke="#727889" stroke-width="1"/></svg>
<span class="t" style="left:1519.0px;top:87.5px;font-size:10.6px;line-height:14.6px;color:#777d8f;transform:scaleX(0.970);-webkit-text-stroke:0.3px #777d8f;">Messen</span>
<svg class="r" style="left:1534.0px;top:103.5px;" width="6" height="3.5" viewBox="0 0 6 3.5"><path d="M0 0H6L3.0 3.5Z" fill="#727889"/></svg>
<svg class="r" style="left:1569.0px;top:55.0px;" width="16" height="16" viewBox="0 0 16 16"><path d="M1 3L1 14L4 11L6.5 15.5L8 14.7L5.7 10.5L9 10Z" fill="#727889"/><rect x="8.5" y="6.5" width="7" height="8" fill="none" stroke="#727889" stroke-width="1.1"/><path d="M8.5 9.5H15.5M8.5 12H15.5M12 6.5V14.5" stroke="#727889" stroke-width=".9"/><path d="M9 0L6 2.5L9 5M6 2.5H12" fill="none" stroke="#727889" stroke-width="1"/></svg>
<svg class="r" style="left:1569.0px;top:77.0px;" width="16" height="16" viewBox="0 0 16 16"><rect x="1" y="1" width="12" height="12" fill="none" stroke="#727889" stroke-width="1" stroke-dasharray="2 1.2"/><path d="M4 4V10H8" fill="none" stroke="#727889" stroke-width="1.3"/><path d="M8 5L8 15L10.5 12.5L12.5 16L14 15.2L12 11.8L15 11.5Z" fill="#727889"/></svg>
<svg class="r" style="left:1569.0px;top:99.0px;" width="16" height="16" viewBox="0 0 16 16"><rect x="2.5" y="0.5" width="11" height="15" fill="none" stroke="#727889" stroke-width="1.2"/><rect x="4.5" y="2.5" width="7" height="3" fill="#727889"/><path d="M4.5 8.5H11.5M4.5 11H11.5M4.5 13.5H11.5" stroke="#727889" stroke-width="1.4" stroke-dasharray="1.8 .8"/></svg>
<span class="t" style="left:1498.0px;top:121.8px;font-size:12px;line-height:16px;color:#eceef2;transform:scaleX(0.933);-webkit-text-stroke:0.55px #eceef2;">Dienstprogramme</span>
<svg class="r" style="left:1592.5px;top:128.5px;" width="7" height="4" viewBox="0 0 7 4"><path d="M0 0H7L3.5 4Z" fill="#eceef2"/></svg>
<svg class="r" style="left:1626.0px;top:54.0px;" width="26" height="31" viewBox="0 0 26 31"><rect x="0.5" y="3" width="17" height="22" fill="#727889"/><rect x="5" y="1" width="8" height="4" fill="#727889"/><path d="M8 9H19L25.5 15V30.5H8Z" fill="#727889" stroke="#3d4457" stroke-width="1"/><path d="M19 9V15H25.5" fill="#6d7383" stroke="#3d4457" stroke-width="1"/></svg>
<span class="t" style="left:1618.0px;top:87.1px;font-size:10.6px;line-height:14.6px;color:#777d8f;transform:scaleX(1.028);-webkit-text-stroke:0.3px #777d8f;">Einfügen</span>
<svg class="r" style="left:1636.0px;top:103.5px;" width="6" height="3.5" viewBox="0 0 6 3.5"><path d="M0 0H6L3.0 3.5Z" fill="#727889"/></svg>
<svg class="r" style="left:1675.0px;top:55.0px;" width="16" height="16" viewBox="0 0 16 16"><rect x="1" y="1" width="10" height="10" fill="none" stroke="#727889" stroke-width="1.2"/><path d="M3 4H9M3 6.5H9M3 9H7" stroke="#727889" stroke-width="1"/><path d="M8 7L14 14M14 7L8 14" stroke="#727889" stroke-width="1.2"/><circle cx="7.5" cy="14.5" r="1.5" fill="none" stroke="#727889"/><circle cx="14.5" cy="14.5" r="1.5" fill="none" stroke="#727889"/></svg>
<svg class="r" style="left:1675.0px;top:78.0px;" width="16" height="16" viewBox="0 0 16 16"><path d="M1 1H7L9 3V11H1Z" fill="#727889"/><path d="M5 5H11L14 8V15.5H5Z" fill="#727889" stroke="#3d4457" stroke-width=".8"/></svg>
<svg class="r" style="left:1695.0px;top:61.2px;" width="6" height="3.5" viewBox="0 0 6 3.5"><path d="M0 0H6L3.0 3.5Z" fill="#727889"/></svg>
<svg class="r" style="left:1695.0px;top:83.8px;" width="6" height="3.5" viewBox="0 0 6 3.5"><path d="M0 0H6L3.0 3.5Z" fill="#727889"/></svg>
<span class="t" style="left:1616.5px;top:121.8px;font-size:12px;line-height:16px;color:#eceef2;transform:scaleX(0.917);-webkit-text-stroke:0.55px #eceef2;">Zwischenablage</span>
<svg class="r" style="left:1728.0px;top:58.0px;" width="31" height="23" viewBox="0 0 31 23"><path d="M0 0H15V10H30.5V22.5H0Z" fill="#727889"/></svg>
<span class="t" style="left:1731.0px;top:87.1px;font-size:10.6px;line-height:14.6px;color:#777d8f;transform:scaleX(0.907);-webkit-text-stroke:0.3px #777d8f;">Basis</span>
<svg class="r" style="left:1739.0px;top:103.5px;" width="6" height="3.5" viewBox="0 0 6 3.5"><path d="M0 0H6L3.0 3.5Z" fill="#727889"/></svg>
<span class="t" style="left:1712.0px;top:121.8px;font-size:12px;line-height:16px;color:#eceef2;transform:scaleX(0.940);-webkit-text-stroke:0.55px #eceef2;">Ansicht</span>
<svg class="r" style="left:1755.0px;top:128.5px;" width="7" height="4" viewBox="0 0 7 4"><path d="M0 0H7L3.5 4Z" fill="#eceef2"/></svg>
<svg class="r" style="left:1768.0px;top:127.0px;" width="6" height="6" viewBox="0 0 6 6"><path d="M0.5 0.5L5.2 5.2M5.4 1.6V5.4H1.6" stroke="#b4b9c5" stroke-width="1.2" fill="none"/></svg>
<div class="r" style="left:0.0px;top:138.5px;width:1779.0px;height:25.0px;background:#252b3b;"></div>
<svg class="r" style="left:14.0px;top:146.0px;" width="17" height="14" viewBox="0 0 17 14"><path d="M0.5 2H16.5M0.5 7H16.5M0.5 12H16.5" stroke="#fff" stroke-width="2"/></svg>
<svg class="r" style="left:38.0px;top:143.0px;" width="10" height="20" viewBox="0 0 10 20"><path d="M8 1L2 19" stroke="#5d6475" stroke-width="1"/></svg>
<span class="t" style="left:54.0px;top:144.8px;font-size:12px;line-height:16px;color:#f0f0f4;transform:scaleX(0.868);-webkit-text-stroke:0.4px #f0f0f4;">Start</span>
<svg class="r" style="left:82.0px;top:141.0px;" width="106" height="22.5" viewBox="0 0 106 22.5"><path d="M10 0H106L97 22.5H0Z" fill="#3d4457"/></svg>
<span class="t" style="left:98.0px;top:144.8px;font-size:12px;line-height:16px;color:#fff;transform:scaleX(0.891);-webkit-text-stroke:0.4px #fff;font-weight:bold;">Zeichnung3</span>
<svg class="r" style="left:165.5px;top:148.5px;" width="9" height="9" viewBox="0 0 9 9"><path d="M1 1L8 8M8 1L1 8" stroke="#c0c4ce" stroke-width="1.4"/></svg>
<svg class="r" style="left:193.0px;top:146.0px;" width="14" height="14" viewBox="0 0 14 14"><path d="M7 0.5V13.5M0.5 7H13.5" stroke="#fff" stroke-width="1.8"/></svg>
<svg class="r" style="left:214.0px;top:143.0px;" width="10" height="20" viewBox="0 0 10 20"><path d="M8 1L2 19" stroke="#5d6475" stroke-width="1"/></svg>
<div class="r" style="left:0.0px;top:163.5px;width:1779.0px;height:5.0px;background:#434a60;"></div>
<div class="r" style="left:0.0px;top:168.5px;width:23.0px;height:780.0px;background:#242a3a;"></div>
<div class="r" style="left:1.0px;top:171.0px;width:21.0px;height:23.5px;background:#40475a;"></div>
<svg class="r" style="left:3.0px;top:174.0px;" width="17" height="17" viewBox="0 0 17 17"><path d="M5.5 0.5H13.5L8 5.5H0.5Z" fill="#eeeff3"/><path d="M0.5 7.6H7V9.4H0.5ZM0.5 11H7V12.8H0.5Z" fill="#f4f5f8"/><rect x="8" y="6" width="9" height="11" rx="1" fill="#fff"/><rect x="9.8" y="8.2" width="5.4" height="2.4" fill="none" stroke="#222836" stroke-width="1.1"/><path d="M10 12.6H15" stroke="#222836" stroke-width="1"/><path d="M11 13.4H14L12.5 15.2Z" fill="#222836"/></svg>
<div class="r" style="left:23.0px;top:168.0px;width:314.7px;height:780.0px;background:#3d4457;"></div>
<div class="r" style="left:337.6px;top:167.5px;width:1.5px;height:781.0px;background:#0b0d18;"></div>
<div class="r" style="left:23.0px;top:170.0px;width:310.0px;height:18.3px;background:#323849;"></div>
<svg class="r" style="left:28.0px;top:174.6px;" width="4" height="10" viewBox="0 0 4 10"><path d="M0.7 0V10M3.2 0V10" stroke="#dfe2ea" stroke-width="1.4" stroke-dasharray="1.1 .9"/></svg>
<div class="r" style="left:33.0px;top:200.0px;width:293.0px;height:20.0px;background:#50586f;"></div>
<span class="t" style="left:36.7px;top:203.1px;font-size:10.5px;line-height:14.5px;color:#f2f3f6;transform:scaleX(0.937);-webkit-text-stroke:0.4px #f2f3f6;">Modellbereich (1)</span>
<svg class="r" style="left:313.0px;top:207.8px;" width="8" height="4.5" viewBox="0 0 8 4.5"><path d="M0 0H8L4.0 4.5Z" fill="#f0f0f4"/></svg>
<div class="r" style="left:180.0px;top:241.5px;width:1.0px;height:261.0px;background:#535b70;"></div>
<div class="r" style="left:33.0px;top:226.0px;width:293.0px;height:15.5px;background:#30364a;"></div>
<svg class="r" style="left:37.0px;top:229.8px;" width="9" height="9" viewBox="0 0 9 9"><rect x="0.5" y="0.5" width="8" height="8" fill="#262c3c" stroke="#14171f" stroke-width="1"/><path d="M2.5 4.5H6.5" stroke="#0c0e14" stroke-width="1.2"/></svg>
<span class="t" style="left:52.6px;top:226.0px;font-size:11px;line-height:15px;color:#fff;transform:scaleX(0.963);font-weight:bold;">Allgemeines</span>
<div class="r" style="left:33.0px;top:241.5px;width:16.0px;height:15.5px;background:#363d50;"></div>
<div class="r" style="left:49.0px;top:241.5px;width:277.0px;height:15.5px;background:#434a5e;"></div>
<div class="r" style="left:49.0px;top:256.0px;width:277.0px;height:1.0px;background:#525a6e;"></div>
<span class="t" style="left:52.6px;top:241.5px;font-size:10.5px;line-height:14.5px;color:#f0f1f5;transform:scaleX(0.916);-webkit-text-stroke:0.4px #f0f1f5;">Maßstab</span>
<span class="t" style="left:184.3px;top:241.5px;font-size:10.5px;line-height:14.5px;color:#f0f1f5;transform:scaleX(0.964);-webkit-text-stroke:0.4px #f0f1f5;">1:50</span>
<div class="r" style="left:33.0px;top:257.0px;width:16.0px;height:15.8px;background:#363d50;"></div>
<div class="r" style="left:49.0px;top:257.0px;width:277.0px;height:15.8px;background:#434a5e;"></div>
<div class="r" style="left:49.0px;top:271.8px;width:277.0px;height:1.0px;background:#525a6e;"></div>
<span class="t" style="left:52.6px;top:257.1px;font-size:10.5px;line-height:14.5px;color:#f0f1f5;transform:scaleX(0.943);-webkit-text-stroke:0.4px #f0f1f5;">Zeichnungseinheit</span>
<span class="t" style="left:184.3px;top:257.1px;font-size:10.5px;line-height:14.5px;color:#f0f1f5;transform:scaleX(0.884);-webkit-text-stroke:0.4px #f0f1f5;">Millimeter</span>
<div class="r" style="left:33.0px;top:272.8px;width:293.0px;height:15.7px;background:#30364a;"></div>
<svg class="r" style="left:37.0px;top:276.6px;" width="9" height="9" viewBox="0 0 9 9"><rect x="0.5" y="0.5" width="8" height="8" fill="#262c3c" stroke="#14171f" stroke-width="1"/><path d="M2.5 4.5H6.5" stroke="#0c0e14" stroke-width="1.2"/></svg>
<span class="t" style="left:52.6px;top:272.9px;font-size:11px;line-height:15px;color:#fff;transform:scaleX(0.978);font-weight:bold;">AutoCAD</span>
<div class="r" style="left:33.0px;top:288.5px;width:16.0px;height:15.9px;background:#363d50;"></div>
<div class="r" style="left:49.0px;top:288.5px;width:277.0px;height:15.9px;background:#434a5e;"></div>
<div class="r" style="left:49.0px;top:303.4px;width:277.0px;height:1.0px;background:#525a6e;"></div>
<span class="t" style="left:52.6px;top:288.7px;font-size:10.5px;line-height:14.5px;color:#8e95a6;transform:scaleX(0.942);-webkit-text-stroke:0.4px #8e95a6;">ObjectHandle</span>
<span class="t" style="left:184.3px;top:288.7px;font-size:10.5px;line-height:14.5px;color:#f0f1f5;transform:scaleX(0.968);-webkit-text-stroke:0.4px #f0f1f5;">28</span>
<div class="r" style="left:33.0px;top:304.4px;width:293.0px;height:16.0px;background:#30364a;"></div>
<svg class="r" style="left:37.0px;top:308.4px;" width="9" height="9" viewBox="0 0 9 9"><rect x="0.5" y="0.5" width="8" height="8" fill="#262c3c" stroke="#14171f" stroke-width="1"/><path d="M2.5 4.5H6.5" stroke="#0c0e14" stroke-width="1.2"/></svg>
<span class="t" style="left:52.6px;top:304.7px;font-size:11px;line-height:15px;color:#fff;transform:scaleX(1.127);font-weight:bold;">ID</span>
<div class="r" style="left:33.0px;top:320.4px;width:16.0px;height:15.4px;background:#363d50;"></div>
<div class="r" style="left:49.0px;top:320.4px;width:277.0px;height:15.4px;background:#434a5e;"></div>
<div class="r" style="left:49.0px;top:334.8px;width:277.0px;height:1.0px;background:#525a6e;"></div>
<span class="t" style="left:52.6px;top:320.3px;font-size:10.5px;line-height:14.5px;color:#f0f1f5;transform:scaleX(0.921);-webkit-text-stroke:0.4px #f0f1f5;">Bauteilklasse</span>
<span class="t" style="left:184.3px;top:320.3px;font-size:10.5px;line-height:14.5px;color:#f0f1f5;transform:scaleX(0.933);-webkit-text-stroke:0.4px #f0f1f5;">Modellbereich</span>
<div class="r" style="left:34.0px;top:506.0px;width:291.5px;height:48.5px;border:1px solid #c9cdd8;"></div>
<div class="r" style="left:23.0px;top:570.0px;width:310.0px;height:18.3px;background:#323849;"></div>
<svg class="r" style="left:28.0px;top:573.3px;" width="4" height="11" viewBox="0 0 4 11"><path d="M0.7 0V11M3.2 0V11" stroke="#c9ccd6" stroke-width="1.3" stroke-dasharray="1.1 .9"/></svg>
<span class="t" style="left:37.0px;top:570.1px;font-size:12px;line-height:16px;color:#f2f3f6;transform:scaleX(0.819);-webkit-text-stroke:0.4px #f2f3f6;">EIGENSCHAFTEN</span>
<div class="r" style="left:39.5px;top:600.5px;width:218.5px;height:20.5px;background:#4a536b;border:1px solid #5f6983;"></div>
<span class="t" style="left:43.0px;top:602.8px;font-size:12px;line-height:16px;color:#f4f5f8;transform:scaleX(0.896);-webkit-text-stroke:0.4px #f4f5f8;">Keine Auswahl</span>
<svg class="r" style="left:246.6px;top:609.2px;" width="8" height="4.5" viewBox="0 0 8 4.5"><path d="M0 0H8L4.0 4.5Z" fill="#f0f0f4"/></svg>
<svg class="r" style="left:265.0px;top:603.0px;" width="16" height="16" viewBox="0 0 16 16"><rect x="0.5" y="2.5" width="7" height="7" fill="#4f9bd8" stroke="#a8d4f4" stroke-width="1"/><rect x="5.5" y="8" width="7.5" height="7.5" fill="#8cc8f0" stroke="#d6ecfa" stroke-width="1"/><path d="M12 0V7M8.5 3.5H15.5" stroke="#64d09a" stroke-width="2"/></svg>
<svg class="r" style="left:287.0px;top:603.0px;" width="16" height="16" viewBox="0 0 16 16"><rect x="1" y="1" width="11" height="10" fill="#5aa66a" stroke="#d8f0dc" stroke-width="1.2" stroke-dasharray="2 1"/><path d="M8 6L8 15.5L10.3 13.2L12 16.3L13.6 15.5L12 12.3L15 12Z" fill="#fff" stroke="#222" stroke-width=".6"/></svg>
<svg class="r" style="left:309.0px;top:603.0px;" width="17" height="16" viewBox="0 0 17 16"><path d="M1 4L1 14L3.6 11.5L5.4 15.2L7 14.4L5.3 10.9L8.4 10.6Z" fill="#fff"/><rect x="8.5" y="7.5" width="7.5" height="8" fill="#a9d6f2" stroke="#fff" stroke-width="1.2"/><path d="M12.2 7.5V15.5" stroke="#fff" stroke-width="1"/><path d="M9 0L7 4H10L8.5 7" stroke="#f2c24e" stroke-width="1.4" fill="none"/></svg>
<div class="r" style="left:26.0px;top:624.0px;width:4.0px;height:216.0px;background:#343b4e;"></div>
<div class="r" style="left:39.6px;top:625.3px;width:285.1px;height:17.7px;background:#2f3548;"></div>
<span class="t" style="left:45.0px;top:625.9px;font-size:12px;line-height:16px;color:#fff;transform:scaleX(0.907);font-weight:bold;">Allgemein</span>
<svg class="r" style="left:310.0px;top:632.2px;" width="8" height="4.5" viewBox="0 0 8 4.5"><path d="M0 0H8L4.0 4.5Z" fill="#f0f0f4"/></svg>
<div class="r" style="left:56.0px;top:643.2px;width:268.7px;height:17.6px;background:#424a5e;"></div>
<div class="r" style="left:56.0px;top:643.2px;width:268.7px;height:1.0px;background:#4f576c;"></div>
<div class="r" style="left:178.4px;top:643.2px;width:1.0px;height:17.6px;background:#4f576c;"></div>
<span class="t" style="left:61.4px;top:643.8px;font-size:12px;line-height:16px;color:#e9ebf0;transform:scaleX(0.849);-webkit-text-stroke:0.4px #e9ebf0;">Farbe</span>
<div class="r" style="left:181.4px;top:645.5px;width:13.5px;height:13.0px;background:#000;border:1px solid #c8ccd6;"></div>
<span class="t" style="left:200.3px;top:643.8px;font-size:12px;line-height:16px;color:#f6f7fa;transform:scaleX(0.895);-webkit-text-stroke:0.4px #f6f7fa;">VonLayer</span>
<div class="r" style="left:56.0px;top:660.8px;width:268.7px;height:17.6px;background:#424a5e;"></div>
<div class="r" style="left:56.0px;top:660.8px;width:268.7px;height:1.0px;background:#4f576c;"></div>
<div class="r" style="left:178.4px;top:660.8px;width:1.0px;height:17.6px;background:#4f576c;"></div>
<span class="t" style="left:61.4px;top:661.4px;font-size:12px;line-height:16px;color:#e9ebf0;transform:scaleX(0.853);-webkit-text-stroke:0.4px #e9ebf0;">Layer</span>
<span class="t" style="left:181.0px;top:661.4px;font-size:12px;line-height:16px;color:#f6f7fa;-webkit-text-stroke:0.4px #f6f7fa;">0</span>
<div class="r" style="left:56.0px;top:678.6px;width:268.7px;height:17.6px;background:#424a5e;"></div>
<div class="r" style="left:56.0px;top:678.6px;width:268.7px;height:1.0px;background:#4f576c;"></div>
<div class="r" style="left:178.4px;top:678.6px;width:1.0px;height:17.6px;background:#4f576c;"></div>
<span class="t" style="left:61.4px;top:679.2px;font-size:12px;line-height:16px;color:#e9ebf0;transform:scaleX(0.939);-webkit-text-stroke:0.4px #e9ebf0;">Linientyp</span>
<div class="r" style="left:181.4px;top:686.9px;width:61.5px;height:1.1px;background:#f0f0f4;"></div>
<span class="t" style="left:246.3px;top:679.2px;font-size:12px;line-height:16px;color:#f6f7fa;transform:scaleX(0.901);-webkit-text-stroke:0.4px #f6f7fa;">VonLayer</span>
<div class="r" style="left:56.0px;top:696.3px;width:268.7px;height:17.6px;background:#424a5e;"></div>
<div class="r" style="left:56.0px;top:696.3px;width:268.7px;height:1.0px;background:#4f576c;"></div>
<div class="r" style="left:178.4px;top:696.3px;width:1.0px;height:17.6px;background:#4f576c;"></div>
<span class="t" style="left:61.4px;top:696.9px;font-size:12px;line-height:16px;color:#e9ebf0;transform:scaleX(0.949);-webkit-text-stroke:0.4px #e9ebf0;">Linientypfaktor</span>
<span class="t" style="left:181.0px;top:696.9px;font-size:12px;line-height:16px;color:#f6f7fa;transform:scaleX(0.719);-webkit-text-stroke:0.4px #f6f7fa;">1</span>
<div class="r" style="left:56.0px;top:713.9px;width:268.7px;height:17.6px;background:#424a5e;"></div>
<div class="r" style="left:56.0px;top:713.9px;width:268.7px;height:1.0px;background:#4f576c;"></div>
<div class="r" style="left:178.4px;top:713.9px;width:1.0px;height:17.6px;background:#4f576c;"></div>
<span class="t" style="left:61.4px;top:714.5px;font-size:12px;line-height:16px;color:#e9ebf0;transform:scaleX(0.898);-webkit-text-stroke:0.4px #e9ebf0;">Linienstärke</span>
<div class="r" style="left:181.4px;top:722.9px;width:61.5px;height:1.1px;background:#f0f0f4;"></div>
<span class="t" style="left:246.3px;top:714.5px;font-size:12px;line-height:16px;color:#f6f7fa;transform:scaleX(0.901);-webkit-text-stroke:0.4px #f6f7fa;">VonLayer</span>
<div class="r" style="left:56.0px;top:731.6px;width:268.7px;height:17.6px;background:#424a5e;"></div>
<div class="r" style="left:56.0px;top:731.6px;width:268.7px;height:1.0px;background:#4f576c;"></div>
<div class="r" style="left:178.4px;top:731.6px;width:1.0px;height:17.6px;background:#4f576c;"></div>
<span class="t" style="left:61.4px;top:732.2px;font-size:12px;line-height:16px;color:#e9ebf0;transform:scaleX(0.876);-webkit-text-stroke:0.4px #e9ebf0;">Transparenz</span>
<span class="t" style="left:181.0px;top:732.2px;font-size:12px;line-height:16px;color:#f6f7fa;transform:scaleX(0.868);-webkit-text-stroke:0.4px #f6f7fa;">VonLayer</span>
<div class="r" style="left:56.0px;top:749.2px;width:268.7px;height:17.6px;background:#424a5e;"></div>
<div class="r" style="left:56.0px;top:749.2px;width:268.7px;height:1.0px;background:#4f576c;"></div>
<div class="r" style="left:178.4px;top:749.2px;width:1.0px;height:17.6px;background:#4f576c;"></div>
<span class="t" style="left:61.4px;top:749.8px;font-size:12px;line-height:16px;color:#e9ebf0;transform:scaleX(0.939);-webkit-text-stroke:0.4px #e9ebf0;">Objekthöhe</span>
<span class="t" style="left:181.0px;top:749.8px;font-size:12px;line-height:16px;color:#f6f7fa;-webkit-text-stroke:0.4px #f6f7fa;">0</span>
<div class="r" style="left:56.0px;top:766.8px;width:268.7px;height:1.0px;background:#4f576c;"></div>
<div class="r" style="left:39.6px;top:770.0px;width:285.1px;height:17.4px;background:#2f3548;"></div>
<span class="t" style="left:45.0px;top:770.5px;font-size:12px;line-height:16px;color:#fff;transform:scaleX(0.890);font-weight:bold;">3D-Visualisierung</span>
<svg class="r" style="left:310.0px;top:776.8px;" width="8" height="4.5" viewBox="0 0 8 4.5"><path d="M0 0H8L4.0 4.5Z" fill="#f0f0f4"/></svg>
<div class="r" style="left:56.0px;top:787.6px;width:268.7px;height:17.6px;background:#424a5e;"></div>
<div class="r" style="left:56.0px;top:787.6px;width:268.7px;height:1.0px;background:#4f576c;"></div>
<div class="r" style="left:178.4px;top:787.6px;width:1.0px;height:17.6px;background:#4f576c;"></div>
<span class="t" style="left:61.4px;top:788.2px;font-size:12px;line-height:16px;color:#e9ebf0;transform:scaleX(0.904);-webkit-text-stroke:0.4px #e9ebf0;">Material</span>
<span class="t" style="left:181.0px;top:788.2px;font-size:12px;line-height:16px;color:#f6f7fa;transform:scaleX(0.907);-webkit-text-stroke:0.4px #f6f7fa;">VonLayer</span>
<div class="r" style="left:56.0px;top:805.2px;width:268.7px;height:1.0px;background:#4f576c;"></div>
<div class="r" style="left:39.6px;top:808.0px;width:285.1px;height:17.4px;background:#2f3548;"></div>
<span class="t" style="left:45.0px;top:808.5px;font-size:12px;line-height:16px;color:#fff;transform:scaleX(0.900);font-weight:bold;">Plotstil</span>
<svg class="r" style="left:310.0px;top:814.8px;" width="8" height="4.5" viewBox="0 0 8 4.5"><path d="M0 0H8L4.0 4.5Z" fill="#f0f0f4"/></svg>
<div class="r" style="left:56.0px;top:826.2px;width:268.7px;height:17.6px;background:#424a5e;"></div>
<div class="r" style="left:56.0px;top:826.2px;width:268.7px;height:1.0px;background:#4f576c;"></div>
<div class="r" style="left:178.4px;top:826.2px;width:1.0px;height:17.6px;background:#4f576c;"></div>
<span class="t" style="left:61.4px;top:826.8px;font-size:12px;line-height:16px;color:#e9ebf0;transform:scaleX(0.939);-webkit-text-stroke:0.4px #e9ebf0;">Plotstil</span>
<span class="t" style="left:181.0px;top:826.8px;font-size:12px;line-height:16px;color:#8d94a6;transform:scaleX(0.903);-webkit-text-stroke:0.4px #8d94a6;">VonFarbe</span>
<div class="r" style="left:56.0px;top:844.2px;width:268.7px;height:17.6px;background:#424a5e;"></div>
<div class="r" style="left:56.0px;top:844.2px;width:268.7px;height:1.0px;background:#4f576c;"></div>
<div class="r" style="left:178.4px;top:844.2px;width:1.0px;height:17.6px;background:#4f576c;"></div>
<span class="t" style="left:61.4px;top:844.8px;font-size:12px;line-height:16px;color:#e9ebf0;transform:scaleX(0.928);-webkit-text-stroke:0.4px #e9ebf0;">Plotstiltabelle</span>
<span class="t" style="left:181.0px;top:844.8px;font-size:12px;line-height:16px;color:#f6f7fa;transform:scaleX(0.880);-webkit-text-stroke:0.4px #f6f7fa;">Keine</span>
<div class="r" style="left:56.0px;top:862.0px;width:268.7px;height:17.6px;background:#424a5e;"></div>
<div class="r" style="left:56.0px;top:862.0px;width:268.7px;height:1.0px;background:#4f576c;"></div>
<div class="r" style="left:178.4px;top:862.0px;width:1.0px;height:17.6px;background:#4f576c;"></div>
<span class="t" style="left:61.4px;top:862.6px;font-size:12px;line-height:16px;color:#e9ebf0;transform:scaleX(0.926);-webkit-text-stroke:0.4px #e9ebf0;">Plottabelle  zugeordn...</span>
<span class="t" style="left:181.0px;top:862.6px;font-size:12px;line-height:16px;color:#8d94a6;transform:scaleX(0.962);-webkit-text-stroke:0.4px #8d94a6;">Modell</span>
<div class="r" style="left:56.0px;top:879.8px;width:268.7px;height:17.6px;background:#424a5e;"></div>
<div class="r" style="left:56.0px;top:879.8px;width:268.7px;height:1.0px;background:#4f576c;"></div>
<div class="r" style="left:178.4px;top:879.8px;width:1.0px;height:17.6px;background:#4f576c;"></div>
<span class="t" style="left:61.4px;top:880.4px;font-size:12px;line-height:16px;color:#e9ebf0;transform:scaleX(0.935);-webkit-text-stroke:0.4px #e9ebf0;">Plottabellentyp</span>
<span class="t" style="left:181.0px;top:880.4px;font-size:12px;line-height:16px;color:#8d94a6;transform:scaleX(0.934);-webkit-text-stroke:0.4px #8d94a6;">Nicht verfügbar</span>
<div class="r" style="left:56.0px;top:897.4px;width:268.7px;height:1.0px;background:#4f576c;"></div>
<div class="r" style="left:39.6px;top:900.0px;width:285.1px;height:17.6px;background:#2f3548;"></div>
<span class="t" style="left:45.0px;top:900.6px;font-size:12px;line-height:16px;color:#fff;transform:scaleX(0.864);font-weight:bold;">Ansicht</span>
<svg class="r" style="left:310.0px;top:906.8px;" width="8" height="4.5" viewBox="0 0 8 4.5"><path d="M0 0H8L4.0 4.5Z" fill="#f0f0f4"/></svg>
<div class="r" style="left:56.0px;top:918.0px;width:268.7px;height:17.6px;background:#424a5e;"></div>
<div class="r" style="left:56.0px;top:918.0px;width:268.7px;height:1.0px;background:#4f576c;"></div>
<div class="r" style="left:178.4px;top:918.0px;width:1.0px;height:17.6px;background:#4f576c;"></div>
<span class="t" style="left:61.4px;top:918.6px;font-size:12px;line-height:16px;color:#e9ebf0;transform:scaleX(0.960);-webkit-text-stroke:0.4px #e9ebf0;">Mittelpunkt X</span>
<span class="t" style="left:181.0px;top:918.6px;font-size:12px;line-height:16px;color:#8d94a6;transform:scaleX(0.829);-webkit-text-stroke:0.4px #8d94a6;">461504.17</span>
<div class="r" style="left:56.0px;top:935.6px;width:268.7px;height:17.6px;background:#424a5e;"></div>
<div class="r" style="left:56.0px;top:935.6px;width:268.7px;height:1.0px;background:#4f576c;"></div>
<div class="r" style="left:178.4px;top:935.6px;width:1.0px;height:17.6px;background:#4f576c;"></div>
<span class="t" style="left:61.4px;top:936.2px;font-size:12px;line-height:16px;color:#e9ebf0;transform:scaleX(0.963);-webkit-text-stroke:0.4px #e9ebf0;">Mittelpunkt Y</span>
<span class="t" style="left:181.0px;top:936.2px;font-size:12px;line-height:16px;color:#8d94a6;transform:scaleX(0.829);-webkit-text-stroke:0.4px #8d94a6;">68500.701</span>
<div class="r" style="left:339.0px;top:168.0px;width:1214.0px;height:742.0px;background:#ffffff;"></div>
<span class="t" style="left:342.7px;top:173.0px;font-size:11.5px;line-height:15.5px;color:#111;-webkit-text-stroke:0.4px #111;">[−][Oben][2D-Drahtkörper]</span>
<svg class="r" style="left:1494.0px;top:176.0px;" width="52" height="14" viewBox="0 0 52 14"><rect x="1.6" y="5.3" width="11.2" height="4.8" rx="1.3" fill="#fff" stroke="#4a4a4e" stroke-width="1.1"/><rect x="23.2" y="0.7" width="7.8" height="8.4" rx=".8" fill="#fff" stroke="#3c3c40" stroke-width="1.1"/><rect x="20.6" y="2.7" width="8.2" height="8.4" rx=".8" fill="#fff" stroke="#3c3c40" stroke-width="1.2"/><path d="M23.3 5.4h1.3v1.3h-1.3zM25.7 5.4h1.3v1.3h-1.3zM23.3 7.6h1.3v1.3h-1.3zM25.7 7.6h1.3v1.3h-1.3z" fill="#333"/><path d="M40.2 3L47.2 9.4M47.2 3L40.2 9.4" stroke="#333338" stroke-width="3.8" stroke-linecap="square"/><path d="M40.2 3L47.2 9.4M47.2 3L40.2 9.4" stroke="#fff" stroke-width="1.6" stroke-linecap="square"/></svg>
<svg class="r" style="left:1406.0px;top:196.0px;" width="140" height="140" viewBox="0 0 140 140"><circle cx="70" cy="70" r="56" fill="none" stroke="#fdfcfd" stroke-width="19"/></svg>
<svg class="r" style="left:1461.0px;top:201.4px;" width="30" height="24" viewBox="0 0 30 24"><text x="15" y="18.8" font-size="19" font-weight="bold" text-anchor="middle" font-family="Liberation Sans" fill="#f7f6f9" stroke="#a3a2ac" stroke-width=".9" textLength="14" lengthAdjust="spacingAndGlyphs">N</text></svg>
<svg class="r" style="left:1408.5px;top:253.8px;" width="30" height="24" viewBox="0 0 30 24"><text x="15" y="18.8" font-size="19" font-weight="bold" text-anchor="middle" font-family="Liberation Sans" fill="#f7f6f9" stroke="#a3a2ac" stroke-width=".9" textLength="20" lengthAdjust="spacingAndGlyphs">W</text></svg>
<svg class="r" style="left:1461.0px;top:306.4px;" width="30" height="24" viewBox="0 0 30 24"><text x="15" y="18.8" font-size="19" font-weight="bold" text-anchor="middle" font-family="Liberation Sans" fill="#f7f6f9" stroke="#a3a2ac" stroke-width=".9" textLength="12.5" lengthAdjust="spacingAndGlyphs">S</text></svg>
<svg class="r" style="left:1519.0px;top:257.0px;" width="18" height="18" viewBox="0 0 18 18"><circle cx="9" cy="9" r="7.6" fill="none" stroke="#a3a2ac" stroke-width=".9"/><circle cx="9" cy="9" r="4.4" fill="none" stroke="#a3a2ac" stroke-width=".9"/><circle cx="9" cy="9" r="6" fill="none" stroke="#f4f3f6" stroke-width="2.2"/></svg>
<div class="r" style="left:1452.0px;top:242.0px;width:48.0px;height:48.0px;background:#f1eff3;border:1px solid #9e9ca6;"></div>
<div class="r" style="left:1461.5px;top:251.5px;width:29.0px;height:29.0px;background:#e2e0e6;"></div>
<span class="t" style="left:1462.0px;top:257.2px;font-size:13px;line-height:17px;color:#6a697c;transform:scaleX(0.774);-webkit-text-stroke:0.3px #6a697c;">OBEN</span>
<div class="r" style="left:1454.5px;top:347.0px;width:42.0px;height:15.0px;background:#efedf4;border-radius:3px;"></div>
<span class="t" style="left:1457.7px;top:347.0px;font-size:10.5px;line-height:14.5px;color:#77768a;transform:scaleX(0.911);-webkit-text-stroke:0.4px #77768a;">WKS</span>
<svg class="r" style="left:1484.0px;top:351.0px;" width="9" height="7" viewBox="0 0 9 7"><path d="M0.8 0.8H8.2L4.5 6Z" fill="none" stroke="#9a99aa" stroke-width="1"/></svg>
<div class="r" style="left:1519.0px;top:385.5px;width:31.5px;height:198.5px;background:#eae7ec;border:1.5px solid #807f88;border-radius:5px;"></div>
<svg class="r" style="left:1539.0px;top:387.0px;" width="9" height="9" viewBox="0 0 9 9"><circle cx="4.5" cy="4.5" r="3.6" fill="#d2d0d6" stroke="#77767f" stroke-width=".9"/><path d="M3 3L6 6M6 3L3 6" stroke="#77767f" stroke-width=".9"/></svg>
<svg class="r" style="left:1522.0px;top:401.0px;" width="25" height="25" viewBox="0 0 25 25"><circle cx="12.5" cy="12.5" r="11" fill="none" stroke="#77767f" stroke-width="1.2"/><path d="M12.5 1.5A11 11 0 0 1 23.5 12.5H19A6.5 6.5 0 0 0 12.5 6Z" fill="#cfcdd4" stroke="#77767f" stroke-width=".8"/><circle cx="12.5" cy="12.5" r="6" fill="#f4f3f6" stroke="#77767f" stroke-width="1.2"/></svg>
<svg class="r" style="left:1532.0px;top:432.0px;" width="5" height="3" viewBox="0 0 5 3"><path d="M0 0H5L2.5 3Z" fill="#77767f"/></svg>
<div class="r" style="left:1522.0px;top:439.5px;width:25.0px;height:1.0px;background:#aaa9b2;"></div>
<svg class="r" style="left:1521.5px;top:442.0px;" width="26" height="24" viewBox="0 0 26 24"><path d="M7 22.5Q4.5 18 1.5 14.5Q0.8 12.6 2.8 12.6L6.5 15.5L5.5 5.5Q7 3.6 8.4 5.4L9.6 12L9.6 3Q11.1 1 12.6 3L12.8 11.8L14 3.8Q15.6 2.2 16.9 4L16.3 12.6L18.6 7Q20.4 6 21.3 7.8L19.3 16Q18.5 20 16.5 22.5Z" fill="#f6f5f8" stroke="#77767f" stroke-width="1.1" stroke-linejoin="round"/></svg>
<svg class="r" style="left:1522.0px;top:468.0px;" width="25" height="24" viewBox="0 0 25 24"><path d="M2 2L14 14M2 2H6M2 2V6M2 13L13 2M13 2H9M13 2V6M2 13V9M2 13H6" stroke="#77767f" stroke-width="1.1" fill="none"/><circle cx="17" cy="16" r="4.6" fill="#f4f3f6" stroke="#77767f" stroke-width="1.3"/><path d="M20.3 19.3L24 23" stroke="#77767f" stroke-width="2"/></svg>
<svg class="r" style="left:1532.0px;top:496.5px;" width="5" height="3" viewBox="0 0 5 3"><path d="M0 0H5L2.5 3Z" fill="#77767f"/></svg>
<svg class="r" style="left:1522.0px;top:503.0px;" width="25" height="25" viewBox="0 0 25 25"><ellipse cx="12.5" cy="14.5" rx="10.5" ry="4.5" fill="none" stroke="#77767f" stroke-width="1.2"/><path d="M12.5 1L8 7H10.8V22H14.2V7H17Z" fill="#f4f3f6" stroke="#77767f" stroke-width="1"/><path d="M1 12L4.5 15.5L1 18Z" fill="#77767f"/></svg>
<svg class="r" style="left:1532.0px;top:532.0px;" width="5" height="3" viewBox="0 0 5 3"><path d="M0 0H5L2.5 3Z" fill="#77767f"/></svg>
<div class="r" style="left:1522.0px;top:539.0px;width:25.0px;height:1.0px;background:#aaa9b2;"></div>
<svg class="r" style="left:1523.0px;top:542.0px;" width="23" height="24" viewBox="0 0 23 24"><rect x="0.5" y="0.5" width="6" height="5" fill="none" stroke="#77767f"/><rect x="8.5" y="0.5" width="6" height="5" fill="none" stroke="#77767f"/><rect x="16.5" y="0.5" width="6" height="5" fill="none" stroke="#77767f"/><rect x="0.8" y="8.8" width="15" height="13" fill="#f4f3f6" stroke="#77767f" stroke-width="1.4"/><path d="M5.5 11.5V19L12 15.2Z" fill="#77767f"/></svg>
<svg class="r" style="left:1539.0px;top:572.0px;" width="9" height="9" viewBox="0 0 9 9"><circle cx="4.5" cy="4.5" r="3.4" fill="none" stroke="#77767f" stroke-width=".9"/><path d="M2.8 3.8H6.2L4.5 6Z" fill="#77767f"/></svg>
<svg class="r" style="left:352.0px;top:826.0px;" width="74" height="72" viewBox="0 0 74 72"><path d="M6 19V65H51.5" fill="none" stroke="#111" stroke-width="1.3"/><rect x="2" y="60.5" width="8.5" height="8.5" fill="#fff" stroke="#111" stroke-width="1.2"/><path d="M6 60.5V65H10.5" fill="none" stroke="#111" stroke-width="1"/><path d="M7.5 2L13.6 9L19.8 2M13.6 9V14.5" fill="none" stroke="#111" stroke-width="1.1"/><path d="M56.5 51.5L69 64M69 51.5L56.5 64" fill="none" stroke="#111" stroke-width="1.1"/></svg>
<div class="r" style="left:339.0px;top:910.0px;width:1217.5px;height:38.0px;background:#2a2f40;"></div>
<div class="r" style="left:361.5px;top:914.6px;width:1193.5px;height:33.4px;background:#cdc9ce;"></div>
<div class="r" style="left:1555.0px;top:914.6px;width:1.0px;height:33.4px;background:#f4f2f5;"></div>
<svg class="r" style="left:343.0px;top:917.0px;" width="16" height="8" viewBox="0 0 16 8"><path d="M0 1.5H16M0 5.5H16" stroke="#f0f0f4" stroke-width="1.8" stroke-dasharray="1.6 1"/></svg>
<svg class="r" style="left:345.0px;top:930.0px;" width="11" height="11" viewBox="0 0 11 11"><path d="M1 1L10 10M10 1L1 10" stroke="#fff" stroke-width="1.9"/></svg>
<span class="t" style="left:364.4px;top:919.6px;font-size:12px;line-height:16px;color:#000;transform:scaleX(0.865);-webkit-text-stroke:0.4px #000;font-family:'Liberation Mono',monospace;">Befehl:</span>
<span class="t" style="left:364.4px;top:933.5px;font-size:12px;line-height:16px;color:#000;transform:scaleX(0.893);-webkit-text-stroke:0.4px #000;font-family:'Liberation Mono',monospace;">Befehl: MultiDwgEdit</span>
<div class="r" style="left:1553.0px;top:168.0px;width:1.4px;height:742.0px;background:#080a14;"></div>
<div class="r" style="left:1554.3px;top:168.0px;width:224.7px;height:742.0px;background:#4d546c;"></div>
<div class="r" style="left:1556.5px;top:910.0px;width:222.5px;height:38.0px;background:#4d546c;"></div>
<div class="r" style="left:1558.5px;top:170.5px;width:220.5px;height:27.0px;background:#262c3b;"></div>
<div class="r" style="left:1558.5px;top:197.5px;width:173.5px;height:31.0px;background:#262c3b;"></div>
<div class="r" style="left:1732.0px;top:197.0px;width:47.0px;height:2.4px;background:#74bd80;"></div>
<svg class="r" style="left:1566.0px;top:177.0px;" width="13" height="14" viewBox="0 0 13 14"><path d="M1 4L5.5 1V11L1 13.5Z" fill="#f0f0f4"/><path d="M5.5 1L12 4V8L9.5 6.5V12L7 13V5Z" fill="#b8bcc8"/><path d="M9.5 6.5L12 8V11L9.5 12Z" fill="#888e9e"/></svg>
<span class="t" style="left:1584.0px;top:176.2px;font-size:12px;line-height:16px;color:#f4f5f8;transform:scaleX(0.907);-webkit-text-stroke:0.4px #f4f5f8;">Trinkwasser, 3D - Modellplanung</span>
<svg class="r" style="left:1569.0px;top:205.0px;" width="22" height="19" viewBox="0 0 22 19"><path d="M0 2.5H22M0 9.5H22M0 16.5H22" stroke="#ffffff" stroke-width="2.6"/></svg>
<svg class="r" style="left:1611.0px;top:202.0px;" width="24" height="24" viewBox="0 0 24 24"><path d="M12 3.5H1.5V22.5H20.5V12" fill="none" stroke="#ffffff" stroke-width="1.6"/><path d="M7 17L8.5 12L18.5 2L22 5.5L12 15.5Z" fill="#262c3b" stroke="#ffffff" stroke-width="1.6"/><path d="M7 17L8.5 12L12 15.5Z" fill="#ffffff"/></svg>
<svg class="r" style="left:1657.0px;top:203.0px;" width="18" height="23" viewBox="0 0 18 23"><rect x="1" y="1" width="16" height="21" rx="1" fill="none" stroke="#ffffff" stroke-width="1.6"/><rect x="4" y="4" width="10" height="4" fill="none" stroke="#ffffff" stroke-width="1.4"/><path d="M4 12.5H14M4 17H14" stroke="#ffffff" stroke-width="2.8" stroke-dasharray="2.6 1.1"/></svg>
<svg class="r" style="left:1700.0px;top:203.0px;" width="21" height="23" viewBox="0 0 21 23"><path d="M1 1H11L20 10V22H1Z" fill="none" stroke="#ffffff" stroke-width="1.6"/><path d="M11 1V10H20Z" fill="#d8dae2"/></svg>
<svg class="r" style="left:1744.0px;top:203.0px;" width="24" height="23" viewBox="0 0 24 23"><path d="M1 6V1H6M18 1H23V6M23 17V22H18M6 22H1V17" fill="none" stroke="#ffffff" stroke-width="1.5"/><circle cx="6.5" cy="11.5" r="2" fill="#ffffff"/><circle cx="12" cy="11.5" r="2" fill="#ffffff"/><circle cx="17.5" cy="11.5" r="2" fill="#ffffff"/></svg>
<span class="t" style="left:1568.4px;top:233.3px;font-size:12px;line-height:16px;color:#f4f5f8;transform:scaleX(0.867);-webkit-text-stroke:0.4px #f4f5f8;">Tools</span>
<div class="r" style="left:1651.0px;top:251.0px;width:28.0px;height:27.0px;background:#353d4f;"></div>
<div class="r" style="left:1651.0px;top:251.0px;width:28.0px;height:2.2px;background:#74bd80;"></div>
<svg class="r" style="left:1573.0px;top:256.0px;" width="16" height="16" viewBox="0 0 16 16"><rect x="3.5" y="3.5" width="9" height="9" fill="#7a8196" stroke="#ffffff" stroke-width="1.2"/><path d="M0.7 4V0.7H4M12 0.7H15.3V4M15.3 12V15.3H12M4 15.3H0.7V12" fill="none" stroke="#ffffff" stroke-width="1.2"/></svg>
<svg class="r" style="left:1601.0px;top:256.0px;" width="17" height="17" viewBox="0 0 17 17"><path d="M0.7 4V0.7H4M12 0.7H15.3V4M4 15.3H0.7V12" fill="none" stroke="#ffffff" stroke-width="1.2"/><rect x="3.5" y="3.5" width="7" height="8" fill="none" stroke="#ffffff" stroke-width="1.2"/><circle cx="12" cy="12" r="3.2" fill="none" stroke="#58a8ec" stroke-width="2.4" stroke-dasharray="1.8 1"/></svg>
<svg class="r" style="left:1629.0px;top:256.0px;" width="18" height="17" viewBox="0 0 18 17"><rect x="1" y="1" width="9.5" height="14.5" fill="none" stroke="#ffffff" stroke-width="1.3"/><rect x="3" y="3" width="5.5" height="4" fill="#58a8ec"/><path d="M3 10H7M3 12.5H6" stroke="#ffffff" stroke-width="1"/><path d="M6 16L8 11L14.5 4.5L17 7L10.5 13.5Z" fill="#ffffff" stroke="#353d4f" stroke-width=".8"/></svg>
<svg class="r" style="left:1656.0px;top:255.0px;" width="18" height="18" viewBox="0 0 18 18"><path d="M2.2 13.5L9.4 6.3A4.2 4.2 0 0 1 14.8 1.2L12.2 3.8L14.2 5.8L16.8 3.2A4.2 4.2 0 0 1 11.7 8.6L4.5 15.8A1.6 1.6 0 0 1 2.2 13.5Z" fill="#ffffff"/></svg>
<svg class="r" style="left:1683.0px;top:256.0px;" width="19" height="17" viewBox="0 0 19 17"><path d="M1 1H17V6H1Z" fill="none" stroke="#ffffff" stroke-width="1.3"/><path d="M4 1V3.5M7 1V3.5M10 1V3.5M13 1V3.5" stroke="#ffffff" stroke-width="1"/><path d="M5 16L6.5 12L12.5 6L15 8.5L9 14.5Z" fill="#ffffff"/></svg>
<svg class="r" style="left:1712.0px;top:255.5px;" width="17" height="17" viewBox="0 0 17 17"><circle cx="8.5" cy="8.5" r="4.3" fill="none" stroke="#ffffff" stroke-width="2.6"/><path d="M8.5 0.5V16.5M0.5 8.5H16.5M2.8 2.8L14.2 14.2M14.2 2.8L2.8 14.2" stroke="#ffffff" stroke-width="2.4" stroke-dasharray="2.6 10.8"/></svg>
<div class="r" style="left:1568.0px;top:277.5px;width:200.0px;height:661.3px;background:#353d4f;"></div>
<span class="t" style="left:1573.4px;top:280.5px;font-size:10.8px;line-height:14.8px;color:#f4f5f8;transform:scaleX(0.983);-webkit-text-stroke:0.45px #f4f5f8;">Ansichten</span>
<svg class="r" style="left:1573.0px;top:301.0px;" width="17" height="17" viewBox="0 0 17 17"><path d="M1 5.5L5 1.5H15.5V11.5L11.5 15.5H1Z" fill="none" stroke="#ffffff" stroke-width="1.5"/><path d="M1 5.5L5 1.5H15.5L11.5 5.5Z" fill="#6bb6f0"/><path d="M5 9V15M8 9V15" stroke="#ffffff" stroke-width="1"/><path d="M1 5.5H11.5V15.5M11.5 5.5L15.5 1.5" fill="none" stroke="#ffffff" stroke-width="1.5"/></svg>
<svg class="r" style="left:1599.0px;top:301.0px;" width="17" height="17" viewBox="0 0 17 17"><path d="M1 5.5L5 1.5H15.5V11.5L11.5 15.5H1Z" fill="none" stroke="#ffffff" stroke-width="1.5"/><path d="M1 5.5H11.5V15.5H1Z" fill="#6bb6f0" opacity=".55"/><path d="M1 5.5L5 1.5H15.5L11.5 5.5Z" fill="#6bb6f0"/><path d="M5 1.5V11.5H15.5M5 11.5L1 15.5" fill="none" stroke="#ffffff" stroke-width=".9"/><path d="M1 5.5H11.5V15.5M11.5 5.5L15.5 1.5" fill="none" stroke="#ffffff" stroke-width="1.5"/></svg>
<svg class="r" style="left:1625.0px;top:301.0px;" width="17" height="17" viewBox="0 0 17 17"><path d="M1 5.5L5 1.5H15.5V11.5L11.5 15.5H1Z" fill="none" stroke="#ffffff" stroke-width="1.5"/><path d="M5 1.5V11.5H15.5M5 11.5L1 15.5" fill="none" stroke="#ffffff" stroke-width=".9"/><path d="M7 8H11.5V15.5H7Z" fill="#6bb6f0"/><path d="M1 5.5H11.5V15.5M11.5 5.5L15.5 1.5" fill="none" stroke="#ffffff" stroke-width="1.5"/></svg>
<svg class="r" style="left:1651.0px;top:301.0px;" width="17" height="17" viewBox="0 0 17 17"><path d="M1 5.5L5 1.5H15.5V11.5L11.5 15.5H1Z" fill="none" stroke="#ffffff" stroke-width="1.5"/><path d="M1 5.5H11.5V15.5H1Z" fill="#6bb6f0"/><path d="M1 5.5H11.5V15.5M11.5 5.5L15.5 1.5" fill="none" stroke="#ffffff" stroke-width="1.5"/></svg>
<svg class="r" style="left:1677.0px;top:301.0px;" width="17" height="17" viewBox="0 0 17 17"><path d="M1 5.5L5 1.5H15.5V11.5L11.5 15.5H1Z" fill="none" stroke="#ffffff" stroke-width="1.5"/><path d="M11.5 5.5L15.5 1.5V11.5L11.5 15.5Z" fill="#6bb6f0"/><path d="M5 1.5V11.5H15.5M5 11.5L1 15.5" fill="none" stroke="#ffffff" stroke-width=".9"/><path d="M1 5.5H11.5V15.5M11.5 5.5L15.5 1.5" fill="none" stroke="#ffffff" stroke-width="1.5"/></svg>
<svg class="r" style="left:1703.0px;top:301.0px;" width="18" height="18" viewBox="0 0 18 18"><rect x="1" y="1" width="11" height="10" fill="#7a8196" stroke="#ffffff" stroke-width="1.2"/><circle cx="11.5" cy="11.5" r="5" fill="#353d4f" stroke="#ffffff" stroke-width="1.2"/><path d="M11.5 6.5V11.5H16.5" fill="none" stroke="#ffffff" stroke-width="1"/></svg>
<svg class="r" style="left:1729.0px;top:301.0px;" width="18" height="17" viewBox="0 0 18 17"><path d="M1 5L5 1H17V12L13 16H1Z" fill="#6bb6f0"/><path d="M1 5H13V16H1Z" fill="#3a6ea0"/><path d="M2.5 7.5H11.5" stroke="#f0f0f4" stroke-width="1.6"/><path d="M2.5 10.5H11.5" stroke="#e05a78" stroke-width="1.6"/><path d="M2.5 13.5H11.5" stroke="#5fd08a" stroke-width="1.6"/></svg>
<svg class="r" style="left:1573.0px;top:327.0px;" width="17" height="17" viewBox="0 0 17 17"><path d="M1.5 5.5L8.5 10V16L1.5 11.5Z" fill="#6bb6f0"/><path d="M8.5 1L15.5 5.5V11.5L8.5 16L1.5 11.5V5.5Z" fill="none" stroke="#ffffff" stroke-width="1.6"/><path d="M1.5 5.5L8.5 10L15.5 5.5M8.5 10V16" fill="none" stroke="#ffffff" stroke-width="1.4"/><path d="M8.5 4L12 6.2L8.5 8.4L5 6.2Z" fill="none" stroke="#ffffff" stroke-width=".9"/></svg>
<svg class="r" style="left:1599.0px;top:327.0px;" width="17" height="17" viewBox="0 0 17 17"><path d="M8.5 1L15.5 5.5V11.5L8.5 16L1.5 11.5V5.5Z" fill="none" stroke="#ffffff" stroke-width="1.6"/><path d="M1.5 5.5L8.5 10L15.5 5.5M8.5 10V16" fill="none" stroke="#ffffff" stroke-width="1.4"/><path d="M8.5 4L12 6.2L8.5 8.4L5 6.2Z" fill="none" stroke="#ffffff" stroke-width=".9"/></svg>
<svg class="r" style="left:1625.0px;top:327.0px;" width="17" height="17" viewBox="0 0 17 17"><path d="M1.5 5.5L8.5 1L15.5 5.5L8.5 10Z" fill="#6bb6f0"/><path d="M8.5 1L15.5 5.5V11.5L8.5 16L1.5 11.5V5.5Z" fill="none" stroke="#ffffff" stroke-width="1.6"/><path d="M1.5 5.5L8.5 10L15.5 5.5M8.5 10V16" fill="none" stroke="#ffffff" stroke-width="1.4"/><path d="M8.5 4L12 6.2L8.5 8.4L5 6.2Z" fill="none" stroke="#ffffff" stroke-width=".9"/></svg>
<svg class="r" style="left:1651.0px;top:327.0px;" width="17" height="17" viewBox="0 0 17 17"><path d="M8.5 1L15.5 5.5V11.5L8.5 16L1.5 11.5V5.5Z" fill="none" stroke="#ffffff" stroke-width="1.6"/><path d="M1.5 5.5L8.5 10L15.5 5.5M8.5 10V16" fill="none" stroke="#ffffff" stroke-width="1.4"/><path d="M8.5 4L12 6.2L8.5 8.4L5 6.2Z" fill="none" stroke="#ffffff" stroke-width=".9"/></svg>
<svg class="r" style="left:1677.0px;top:327.0px;" width="18" height="18" viewBox="0 0 18 18"><path d="M5 1V13H17" fill="none" stroke="#ffffff" stroke-width="1.4"/><path d="M5 0L2.5 3.5H7.5ZM18 13L14.5 10.5V15.5Z" fill="#ffffff"/><circle cx="12" cy="6" r="3.6" fill="#58a8ec"/><path d="M9 5H15M12 2.5V9.5" stroke="#cfe6fa" stroke-width=".7"/></svg>
<svg class="r" style="left:1703.0px;top:327.0px;" width="18" height="18" viewBox="0 0 18 18"><path d="M5 1V13H17" fill="none" stroke="#ffffff" stroke-width="1.4"/><path d="M5 0L2.5 3.5H7.5ZM18 13L14.5 10.5V15.5Z" fill="#ffffff"/><path d="M8 4V2H10M14 2H16V4M16 8V10H14M10 10H8V8" fill="none" stroke="#ffffff" stroke-width="1.1"/><rect x="10.3" y="4.3" width="3.4" height="3.4" fill="none" stroke="#ffffff" stroke-width="1"/></svg>
<svg class="r" style="left:1729.0px;top:327.0px;" width="18" height="18" viewBox="0 0 18 18"><circle cx="7.5" cy="7.5" r="6.3" fill="#c8ccd6"/><path d="M2 5.5H13M1.5 9H9M7.5 1.3V9" stroke="#767c8c" stroke-width=".9" fill="none"/><rect x="8.5" y="9.5" width="9" height="8" fill="#353d4f" stroke="#ffffff" stroke-width="1.2"/><path d="M10.3 12H15.7M10.3 14.8H15.7" stroke="#ffffff" stroke-width="1.1"/></svg>
<div class="r" style="left:1569.0px;top:350.5px;width:198.0px;height:1.3px;background:#4a5268;"></div>
<svg class="r" style="left:1573.0px;top:357.0px;" width="17" height="17" viewBox="0 0 17 17"><path d="M5 1H16L11.5 5H0.5Z" fill="#ffffff"/><path d="M0.5 7H9.5V8.6H0.5ZM0.5 10.5H7.5V12H0.5Z" fill="#ffffff"/><rect x="9.5" y="8.5" width="5" height="5" fill="#58a8ec"/><rect x="11.5" y="11" width="5" height="5" fill="#9ad0f6"/></svg>
<span class="t" style="left:1593.0px;top:358.7px;font-size:10.6px;line-height:14.6px;color:#f4f5f8;-webkit-text-stroke:0.45px #f4f5f8;">Layerinhalt kopieren &lt;</span>
<svg class="r" style="left:1573.0px;top:379.0px;" width="17" height="17" viewBox="0 0 17 17"><path d="M5 1H16L11.5 5H0.5Z" fill="#ffffff"/><path d="M0.5 7H9.5V8.6H0.5ZM0.5 10.5H7.5V12H0.5Z" fill="#ffffff"/><path d="M12.5 8V16.5M8.5 12.3H16.5" stroke="#58a8ec" stroke-width="1.3"/><path d="M12.5 7L10.8 9.2H14.2ZM12.5 17L10.8 15H14.2Z" fill="#58a8ec"/></svg>
<span class="t" style="left:1593.0px;top:380.8px;font-size:10.6px;line-height:14.6px;color:#f4f5f8;-webkit-text-stroke:0.45px #f4f5f8;">Layerinhalt verschieben &lt;</span>
<svg class="r" style="left:1573.0px;top:401.0px;" width="17" height="17" viewBox="0 0 17 17"><path d="M1 6L8.5 1L16 6V16H1Z" fill="none" stroke="#ffffff" stroke-width="1.3"/><path d="M4 8.5H10M4 11H10M4 13.5H8" stroke="#ffffff" stroke-width="1.1"/><rect x="9.5" y="9.5" width="4" height="4" fill="#58a8ec"/><rect x="11.5" y="11.8" width="4" height="4" fill="#9ad0f6"/></svg>
<span class="t" style="left:1593.0px;top:403.4px;font-size:10.6px;line-height:14.6px;color:#f4f5f8;-webkit-text-stroke:0.45px #f4f5f8;">Geschossinhalt kopieren ...</span>
<div class="r" style="left:1569.0px;top:422.5px;width:198.0px;height:1.3px;background:#4a5268;"></div>
<div class="r" style="left:1569.0px;top:429.0px;width:123.5px;height:17.5px;background:#2e3546;"></div>
<svg class="r" style="left:1573.0px;top:429.0px;" width="17" height="17" viewBox="0 0 17 17"><path d="M5.5 0V5M3 2.5H8" stroke="#58a8ec" stroke-width="1.4"/><rect x="0.5" y="7.5" width="7" height="8" fill="#e8b04a"/><rect x="8.5" y="5.5" width="8" height="10.5" fill="#353d4f" stroke="#ffffff" stroke-width="1.3"/><path d="M10.5 8.5H14.5M10.5 11H14.5M10.5 13.5H13" stroke="#ffffff" stroke-width="1"/></svg>
<span class="t" style="left:1593.0px;top:430.8px;font-size:10.6px;line-height:14.6px;color:#f4f5f8;-webkit-text-stroke:0.45px #f4f5f8;">Multi-DWG Editor ...</span>
<svg class="r" style="left:1573.0px;top:451.0px;" width="17" height="17" viewBox="0 0 17 17"><path d="M5.5 0V5M3 2.5H8" stroke="#58a8ec" stroke-width="1.4"/><rect x="0.5" y="7.5" width="8" height="8" fill="#e8b04a"/><circle cx="11.5" cy="11.5" r="3.6" fill="#353d4f" stroke="#ffffff" stroke-width="1.4" stroke-dasharray="8 3"/><path d="M14 6.5L15.5 9L12.8 9.2Z" fill="#e04a5a"/></svg>
<span class="t" style="left:1593.0px;top:453.2px;font-size:10.6px;line-height:14.6px;color:#f4f5f8;transform:scaleX(0.969);-webkit-text-stroke:0.45px #f4f5f8;">DWG-Konverter ...</span>
<svg class="r" style="left:1573.0px;top:473.0px;" width="17" height="17" viewBox="0 0 17 17"><path d="M1.5 1H8L11 4V15.5H1.5Z" fill="#d01858"/><circle cx="11.5" cy="11.5" r="3.6" fill="#353d4f" stroke="#ffffff" stroke-width="1.4" stroke-dasharray="8 3"/><path d="M14 6.5L15.5 9L12.8 9.2Z" fill="#58a8ec"/></svg>
<span class="t" style="left:1593.0px;top:475.4px;font-size:10.6px;line-height:14.6px;color:#f4f5f8;transform:scaleX(0.943);-webkit-text-stroke:0.45px #f4f5f8;">DXF-Konverter ...</span>
<div class="r" style="left:1570.0px;top:945.5px;width:12.0px;height:3.0px;background:#e8e9ee;"></div>
<div class="r" style="left:1617.0px;top:945.5px;width:10.0px;height:3.0px;background:#e8e9ee;"></div>
<div class="r" style="left:1640.0px;top:946.0px;width:3.0px;height:2.0px;background:#e8e9ee;"></div>
<div class="r" style="left:1735.0px;top:946.0px;width:8.0px;height:2.0px;background:#e8e9ee;"></div>
<div class="r" style="left:1755.0px;top:946.0px;width:8.0px;height:2.0px;background:#e8e9ee;"></div>
<div class="r" style="left:596.0px;top:274.0px;width:566.0px;height:345.0px;background:#f7f2f6;border:1px solid #4a4a50;box-shadow:0 3px 10px rgba(0,0,0,.2);"></div>
<div class="r" style="left:597.0px;top:275.0px;width:564.0px;height:28.0px;background:#ffffff;"></div>
<span class="t" style="left:604.4px;top:281.7px;font-size:12px;line-height:16px;color:#000;transform:scaleX(0.910);-webkit-text-stroke:0.2px #000;">Alle Zeichnungsdateien in einem Verzeichnis bearbeiten</span>
<span class="t" style="left:1094.5px;top:280.9px;font-size:12.5px;line-height:16.5px;color:#111;transform:scaleX(0.900);-webkit-text-stroke:0.4px #111;">?</span>
<svg class="r" style="left:1134.0px;top:283.0px;" width="11" height="11" viewBox="0 0 11 11"><path d="M0.5 0.5L10.5 10.5M10.5 0.5L0.5 10.5" stroke="#111" stroke-width="1.2"/></svg>
<span class="t" style="left:632.0px;top:308.9px;font-size:11.5px;line-height:15.5px;color:#000;transform:scaleX(0.862);-webkit-text-stroke:0.2px #000;">Pfad der Zeichnungsdateien</span>
<div class="r" style="left:630.3px;top:327.3px;width:477.5px;height:18.0px;background:#fff;border:1px solid #6a6a70;"></div>
<span class="t" style="left:634.5px;top:329.6px;font-size:11px;line-height:15px;color:#111;transform:scaleX(0.879);-webkit-text-stroke:0.2px #111;">C:\E-Learning\MDWGEDIT</span>
<div class="r" style="left:1115.0px;top:328.3px;width:24.7px;height:16.5px;background:#e3e1e4;border:1px solid #b2b0b6;"></div>
<span class="t" style="left:1122.0px;top:330.2px;font-size:11px;line-height:15px;color:#000;transform:scaleX(1.091);-webkit-text-stroke:0.4px #000;">...</span>
<span class="t" style="left:604.0px;top:372.6px;font-size:11.5px;line-height:15.5px;color:#000;transform:scaleX(0.947);-webkit-text-stroke:0.2px #000;">j/n</span>
<div class="r" style="left:630.3px;top:388.6px;width:254.7px;height:33.6px;border:1px solid #e2dee2;"></div>
<div class="r" style="left:636.0px;top:384.4px;width:49.0px;height:10.0px;background:#f7f2f6;"></div>
<span class="t" style="left:638.0px;top:382.3px;font-size:11.5px;line-height:15.5px;color:#000;transform:scaleX(0.869);-webkit-text-stroke:0.2px #000;">alte Farbe</span>
<div class="r" style="left:896.5px;top:388.6px;width:254.3px;height:33.6px;border:1px solid #e2dee2;"></div>
<div class="r" style="left:901.7px;top:384.4px;width:54.8px;height:10.0px;background:#f7f2f6;"></div>
<span class="t" style="left:903.7px;top:382.3px;font-size:11.5px;line-height:15.5px;color:#000;transform:scaleX(0.864);-webkit-text-stroke:0.2px #000;">neue Farbe</span>
<div class="r" style="left:789.0px;top:400.0px;width:87.0px;height:17.0px;background:#ff00ff;border:1px solid #c83cc8;"></div>
<div class="r" style="left:1054.6px;top:398.4px;width:87.4px;height:17.0px;background:#000000;"></div>
<div class="r" style="left:605.0px;top:404.0px;width:12.0px;height:12.0px;background:#fff;border:1.2px solid #222;"></div>
<svg class="r" style="left:605.0px;top:404.0px;" width="12" height="12" viewBox="0 0 12 12"><path d="M2.6 6.2L5 8.6L9.6 3.2" fill="none" stroke="#111" stroke-width="1.3"/></svg>
<div class="r" style="left:630.3px;top:436.6px;width:254.7px;height:34.0px;border:1px solid #e2dee2;"></div>
<div class="r" style="left:636.0px;top:432.6px;width:76.5px;height:10.0px;background:#f7f2f6;"></div>
<span class="t" style="left:638.0px;top:430.5px;font-size:11.5px;line-height:15.5px;color:#000;transform:scaleX(0.873);-webkit-text-stroke:0.2px #000;">alter Layername</span>
<div class="r" style="left:896.5px;top:436.6px;width:254.3px;height:34.0px;border:1px solid #e2dee2;"></div>
<div class="r" style="left:901.7px;top:432.6px;width:81.8px;height:10.0px;background:#f7f2f6;"></div>
<span class="t" style="left:903.7px;top:430.5px;font-size:11.5px;line-height:15.5px;color:#000;transform:scaleX(0.863);-webkit-text-stroke:0.2px #000;">neuer Layername</span>
<div class="r" style="left:638.3px;top:446.0px;width:239.0px;height:17.5px;background:#fff;border:1px solid #6a6a70;"></div>
<div class="r" style="left:904.0px;top:446.0px;width:239.3px;height:17.5px;background:#fff;border:1px solid #6a6a70;"></div>
<div class="r" style="left:605.0px;top:447.0px;width:12.0px;height:12.0px;background:#fff;border:1.2px solid #222;"></div>
<div class="r" style="left:630.3px;top:482.6px;width:254.7px;height:33.4px;border:1px solid #e2dee2;"></div>
<div class="r" style="left:636.0px;top:478.0px;width:66.9px;height:10.0px;background:#f7f2f6;"></div>
<span class="t" style="left:638.0px;top:475.9px;font-size:11.5px;line-height:15.5px;color:#000;transform:scaleX(0.879);-webkit-text-stroke:0.2px #000;">alter Linientyp</span>
<div class="r" style="left:896.5px;top:480.5px;width:254.3px;height:35.5px;border:1px solid #e2dee2;"></div>
<div class="r" style="left:901.7px;top:476.4px;width:72.3px;height:10.0px;background:#f7f2f6;"></div>
<span class="t" style="left:903.7px;top:474.3px;font-size:11.5px;line-height:15.5px;color:#000;transform:scaleX(0.869);-webkit-text-stroke:0.2px #000;">neuer Linientyp</span>
<div class="r" style="left:638.3px;top:491.2px;width:239.0px;height:19.0px;background:#fff;border:1px solid #6a6a70;"></div>
<span class="t" style="left:643.0px;top:494.3px;font-size:10px;line-height:14px;color:#111;transform:scaleX(0.885);-webkit-text-stroke:0.4px #111;">PUNKT</span>
<svg class="r" style="left:864.3px;top:498.5px;" width="9" height="6" viewBox="0 0 9 6"><path d="M0.7 0.8L4.5 4.6L8.3 0.8" fill="none" stroke="#333" stroke-width="1.1"/></svg>
<div class="r" style="left:904.0px;top:491.2px;width:239.3px;height:19.0px;background:#fff;border:1px solid #6a6a70;"></div>
<span class="t" style="left:909.5px;top:494.3px;font-size:10px;line-height:14px;color:#111;transform:scaleX(0.917);-webkit-text-stroke:0.4px #111;">MITTE</span>
<svg class="r" style="left:1130.0px;top:498.5px;" width="9" height="6" viewBox="0 0 9 6"><path d="M0.7 0.8L4.5 4.6L8.3 0.8" fill="none" stroke="#333" stroke-width="1.1"/></svg>
<div class="r" style="left:605.0px;top:495.0px;width:12.0px;height:12.0px;background:#fff;border:1.2px solid #222;"></div>
<svg class="r" style="left:605.0px;top:495.0px;" width="12" height="12" viewBox="0 0 12 12"><path d="M2.6 6.2L5 8.6L9.6 3.2" fill="none" stroke="#111" stroke-width="1.3"/></svg>
<div class="r" style="left:630.3px;top:527.6px;width:254.7px;height:34.9px;border:1px solid #e2dee2;"></div>
<div class="r" style="left:636.0px;top:523.0px;width:76.0px;height:10.0px;background:#f7f2f6;"></div>
<span class="t" style="left:638.0px;top:520.9px;font-size:11.5px;line-height:15.5px;color:#000;transform:scaleX(0.860);-webkit-text-stroke:0.2px #000;">alte Linienstärke</span>
<div class="r" style="left:896.5px;top:527.6px;width:254.3px;height:34.9px;border:1px solid #e2dee2;"></div>
<div class="r" style="left:901.7px;top:523.0px;width:81.6px;height:10.0px;background:#f7f2f6;"></div>
<span class="t" style="left:903.7px;top:520.9px;font-size:11.5px;line-height:15.5px;color:#000;transform:scaleX(0.855);-webkit-text-stroke:0.2px #000;">neue Linienstärke</span>
<div class="r" style="left:788.2px;top:535.2px;width:89.0px;height:18.5px;background:#fff;border:1px solid #6a6a70;"></div>
<span class="t" style="left:793.8px;top:537.6px;font-size:11px;line-height:15px;color:#111;transform:scaleX(0.958);-webkit-text-stroke:0.2px #111;">0.50</span>
<svg class="r" style="left:863.5px;top:542.1px;" width="9" height="6" viewBox="0 0 9 6"><path d="M0.7 0.8L4.5 4.6L8.3 0.8" fill="none" stroke="#333" stroke-width="1.1"/></svg>
<div class="r" style="left:1054.3px;top:535.2px;width:88.5px;height:18.5px;background:#fff;border:1px solid #0a72d2;"></div>
<div class="r" style="left:1059.5px;top:538.0px;width:21.5px;height:13.0px;background:#0c63c4;"></div>
<span class="t" style="left:1060.0px;top:537.6px;font-size:11px;line-height:15px;color:#fff;transform:scaleX(0.958);-webkit-text-stroke:0.4px #fff;">0.18</span>
<svg class="r" style="left:1129.4px;top:542.1px;" width="9" height="6" viewBox="0 0 9 6"><path d="M0.7 0.8L4.5 4.6L8.3 0.8" fill="none" stroke="#333" stroke-width="1.1"/></svg>
<div class="r" style="left:605.0px;top:537.7px;width:12.0px;height:12.0px;background:#fff;border:1.2px solid #222;"></div>
<svg class="r" style="left:605.0px;top:537.7px;" width="12" height="12" viewBox="0 0 12 12"><path d="M2.6 6.2L5 8.6L9.6 3.2" fill="none" stroke="#111" stroke-width="1.3"/></svg>
<div class="r" style="left:631.4px;top:588.4px;width:169.0px;height:19.0px;background:#e3e1e4;border:1px solid #a9a8ae;"></div>
<span class="t" style="left:690.4px;top:590.9px;font-size:11.5px;line-height:15.5px;color:#000;transform:scaleX(0.874);-webkit-text-stroke:0.35px #000;">Bearbeiten</span>
<div class="r" style="left:1083.3px;top:590.0px;width:67.5px;height:19.4px;background:#e3e1e4;border:1px solid #a9a8ae;"></div>
<span class="t" style="left:1096.4px;top:593.5px;font-size:11.5px;line-height:15.5px;color:#000;transform:scaleX(0.838);-webkit-text-stroke:0.35px #000;">Beenden</span>
<svg class="r" style="left:780.5px;top:598.5px;" width="15" height="23" viewBox="0 0 15 23"><path d="M1.5 1.5V17L5.3 13.4L8.2 20.2L11 19L8.2 12.5H13Z" fill="#fff" stroke="#111" stroke-width="1.2" stroke-linejoin="round"/></svg>
<div class="r" style="left:0.0px;top:947.5px;width:1779.0px;height:52.5px;background:#ffffff;"></div>
<svg class="r" style="left:4.5px;top:952.5px;" width="43" height="43" viewBox="0 0 43 43"><circle cx="21.6" cy="21.4" r="21" fill="#1b4959" stroke="#143642" stroke-width=".8"/><path d="M13.2 10.2V33L34.1 21.6Z" fill="#fff"/></svg>
<span class="t" style="left:66.0px;top:967.1px;font-size:10px;line-height:14px;color:#333;transform:scaleX(0.932);-webkit-text-stroke:0.4px #333;">04:08 / 05:41</span>
<div class="r" style="left:143.0px;top:971.8px;width:1363.0px;height:4.0px;background:#d9d9d9;border-radius:2px;"></div>
<div class="r" style="left:143.0px;top:971.5px;width:993.0px;height:4.6px;background:#16323d;border-radius:2px;"></div>
<svg class="r" style="left:1129.5px;top:967.3px;" width="13" height="13" viewBox="0 0 13 13"><circle cx="6.5" cy="6.5" r="6.3" fill="#16323d"/></svg>
<svg class="r" style="left:1605.8px;top:962.9px;" width="22" height="22" viewBox="0 0 22 22"><path d="M9.44 3.56L9.66 0.89L12.34 0.89L12.56 3.56L15.16 4.64L17.20 2.90L19.10 4.80L17.36 6.84L18.44 9.44L21.11 9.66L21.11 12.34L18.44 12.56L17.36 15.16L19.10 17.20L17.20 19.10L15.16 17.36L12.56 18.44L12.34 21.11L9.66 21.11L9.44 18.44L6.84 17.36L4.80 19.10L2.90 17.20L4.64 15.16L3.56 12.56L0.89 12.34L0.89 9.66L3.56 9.44L4.64 6.84L2.90 4.80L4.80 2.90L6.84 4.64Z" fill="none" stroke="#222" stroke-width="1.8" stroke-linejoin="round"/><path d="M14.2 9.2A3.7 3.7 0 1 1 11 7.3" fill="none" stroke="#222" stroke-width="1.8"/></svg>
<svg class="r" style="left:1649.0px;top:966.0px;" width="30" height="16" viewBox="0 0 30 16"><path d="M1.5 2.5V13.5L7 8Z" fill="none" stroke="#b4b4b4" stroke-width="1.3" stroke-linejoin="round"/><path d="M9 2V14L15.5 8Z" fill="none" stroke="#444" stroke-width="1.7" stroke-linejoin="round"/><path d="M17 1.5V14.5L28 8Z" fill="none" stroke="#222" stroke-width="2.1" stroke-linejoin="round"/></svg>
<svg class="r" style="left:1697.0px;top:962.5px;" width="27" height="23" viewBox="0 0 27 23"><path d="M2 8.5H6.5L15 2.5V20.5L6.5 14.5H2Z" fill="none" stroke="#222" stroke-width="1.9" stroke-linejoin="round"/><path d="M17.6 8.6A3.6 3.6 0 0 1 17.6 14.4" fill="none" stroke="#222" stroke-width="1.8"/><path d="M19.6 3.6A9.6 9.6 0 0 1 19.6 19.4" fill="none" stroke="#222" stroke-width="1.8"/></svg>
<svg class="r" style="left:1745.0px;top:964.0px;" width="21" height="21" viewBox="0 0 21 21"><path d="M19.5 1.5L12.5 8.5M12.5 2.8V8.5H18.2M1.5 18.5L8.5 11.5M2.8 11.5H8.5V17.2" fill="none" stroke="#222" stroke-width="1.9"/></svg>
</div></body></html>
